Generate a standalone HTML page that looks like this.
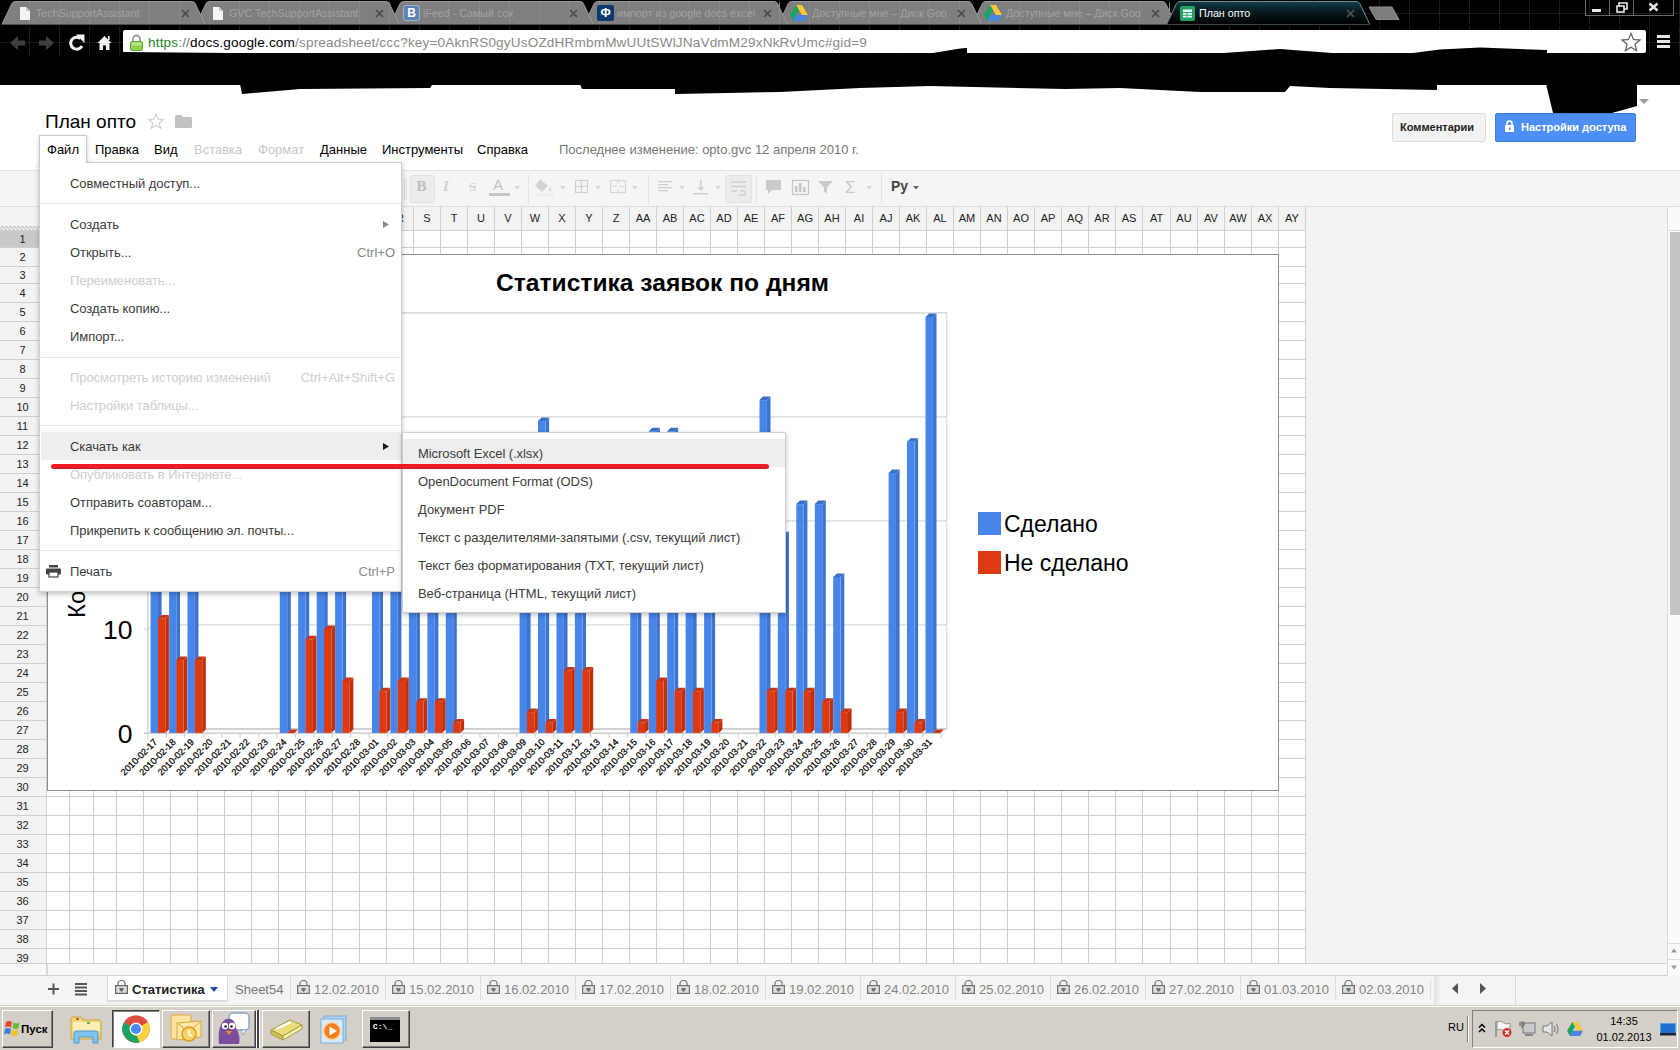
<!DOCTYPE html>
<html lang="ru"><head><meta charset="utf-8"><title>План опто</title>
<style>
html,body{margin:0;padding:0;}
body{width:1680px;height:1050px;overflow:hidden;position:relative;background:#fff;font-family:"Liberation Sans",Arial,sans-serif;font-size:13px;color:#222;}
.abs{position:absolute;}
div,span{box-sizing:border-box;}
svg{position:absolute;overflow:visible;}
.t{position:absolute;white-space:nowrap;line-height:1;}
</style></head><body>
<div class="abs" id="chrome" style="left:0;top:0;width:1680px;height:85px;background:#000;"></div>
<svg width="1680" height="86" style="left:0;top:0"><rect x="29" y="0" width="1" height="56" fill="#1c1c1c"/><rect x="59" y="0" width="1" height="56" fill="#1c1c1c"/><rect x="89" y="0" width="1" height="56" fill="#1c1c1c"/><rect x="119" y="0" width="1" height="56" fill="#1c1c1c"/><rect x="149" y="0" width="1" height="56" fill="#1c1c1c"/><rect x="179" y="0" width="1" height="56" fill="#1c1c1c"/><rect x="209" y="0" width="1" height="56" fill="#1c1c1c"/><rect x="239" y="0" width="1" height="56" fill="#1c1c1c"/><rect x="269" y="0" width="1" height="56" fill="#1c1c1c"/><rect x="299" y="0" width="1" height="56" fill="#1c1c1c"/><rect x="329" y="0" width="1" height="56" fill="#1c1c1c"/><rect x="359" y="0" width="1" height="56" fill="#1c1c1c"/><rect x="389" y="0" width="1" height="56" fill="#1c1c1c"/><rect x="419" y="0" width="1" height="56" fill="#1c1c1c"/><rect x="449" y="0" width="1" height="56" fill="#1c1c1c"/><rect x="479" y="0" width="1" height="56" fill="#1c1c1c"/><rect x="509" y="0" width="1" height="56" fill="#1c1c1c"/><rect x="539" y="0" width="1" height="56" fill="#1c1c1c"/><rect x="569" y="0" width="1" height="56" fill="#1c1c1c"/><rect x="599" y="0" width="1" height="56" fill="#1c1c1c"/><rect x="629" y="0" width="1" height="56" fill="#1c1c1c"/><rect x="659" y="0" width="1" height="56" fill="#1c1c1c"/><rect x="689" y="0" width="1" height="56" fill="#1c1c1c"/><rect x="719" y="0" width="1" height="56" fill="#1c1c1c"/><rect x="749" y="0" width="1" height="56" fill="#1c1c1c"/><rect x="779" y="0" width="1" height="56" fill="#1c1c1c"/><rect x="809" y="0" width="1" height="56" fill="#1c1c1c"/><rect x="839" y="0" width="1" height="56" fill="#1c1c1c"/><rect x="869" y="0" width="1" height="56" fill="#1c1c1c"/><rect x="899" y="0" width="1" height="56" fill="#1c1c1c"/><rect x="929" y="0" width="1" height="56" fill="#1c1c1c"/><rect x="959" y="0" width="1" height="56" fill="#1c1c1c"/><rect x="989" y="0" width="1" height="56" fill="#1c1c1c"/><rect x="1019" y="0" width="1" height="56" fill="#1c1c1c"/><rect x="1049" y="0" width="1" height="56" fill="#1c1c1c"/><rect x="1079" y="0" width="1" height="56" fill="#1c1c1c"/><rect x="1109" y="0" width="1" height="56" fill="#1c1c1c"/><rect x="1139" y="0" width="1" height="56" fill="#1c1c1c"/><rect x="1169" y="0" width="1" height="56" fill="#1c1c1c"/><rect x="1199" y="0" width="1" height="56" fill="#1c1c1c"/><rect x="1229" y="0" width="1" height="56" fill="#1c1c1c"/><rect x="1259" y="0" width="1" height="56" fill="#1c1c1c"/><rect x="1289" y="0" width="1" height="56" fill="#1c1c1c"/><rect x="1319" y="0" width="1" height="56" fill="#1c1c1c"/><rect x="1349" y="0" width="1" height="56" fill="#1c1c1c"/><rect x="1379" y="0" width="1" height="56" fill="#1c1c1c"/><rect x="1409" y="0" width="1" height="56" fill="#1c1c1c"/><rect x="1439" y="0" width="1" height="56" fill="#1c1c1c"/><rect x="1469" y="0" width="1" height="56" fill="#1c1c1c"/><rect x="1499" y="0" width="1" height="56" fill="#1c1c1c"/><rect x="1529" y="0" width="1" height="56" fill="#1c1c1c"/><rect x="1559" y="0" width="1" height="56" fill="#1c1c1c"/><rect x="1589" y="0" width="1" height="56" fill="#1c1c1c"/><rect x="1619" y="0" width="1" height="56" fill="#1c1c1c"/><rect x="1649" y="0" width="1" height="56" fill="#1c1c1c"/><rect x="1679" y="0" width="1" height="56" fill="#1c1c1c"/><rect x="0" y="13" width="1680" height="1" fill="#1c1c1c"/><rect x="0" y="42" width="1680" height="1" fill="#1c1c1c"/></svg>
<svg width="1680" height="26" style="left:0;top:0"><path d="M972.4,24.5 L982.4,3.5 Q983.4,1.5 985.9,1.5 L1162.2,1.5 Q1164.7,1.5 1165.7,3.5 L1175.7,24.5 Z" fill="#7f7f7f" stroke="#9a9a9a" stroke-width="1"/><path d="M778.3,24.5 L788.3,3.5 Q789.3,1.5 791.8,1.5 L968.1,1.5 Q970.6,1.5 971.6,3.5 L981.6,24.5 Z" fill="#7f7f7f" stroke="#9a9a9a" stroke-width="1"/><path d="M584.2,24.5 L594.2,3.5 Q595.2,1.5 597.7,1.5 L774.0,1.5 Q776.5,1.5 777.5,3.5 L787.5,24.5 Z" fill="#7f7f7f" stroke="#9a9a9a" stroke-width="1"/><path d="M390.1,24.5 L400.1,3.5 Q401.1,1.5 403.6,1.5 L579.9,1.5 Q582.4,1.5 583.4,3.5 L593.4,24.5 Z" fill="#7f7f7f" stroke="#9a9a9a" stroke-width="1"/><path d="M196.0,24.5 L206.0,3.5 Q207.0,1.5 209.5,1.5 L385.8,1.5 Q388.3,1.5 389.3,3.5 L399.3,24.5 Z" fill="#7f7f7f" stroke="#9a9a9a" stroke-width="1"/><path d="M1.9,24.5 L11.9,3.5 Q12.9,1.5 15.4,1.5 L191.7,1.5 Q194.2,1.5 195.2,3.5 L205.2,24.5 Z" fill="#7f7f7f" stroke="#9a9a9a" stroke-width="1"/><rect x="29" y="2.5" width="1" height="21.5" fill="#898989"/><rect x="59" y="2.5" width="1" height="21.5" fill="#898989"/><rect x="89" y="2.5" width="1" height="21.5" fill="#898989"/><rect x="119" y="2.5" width="1" height="21.5" fill="#898989"/><rect x="149" y="2.5" width="1" height="21.5" fill="#898989"/><rect x="179" y="2.5" width="1" height="21.5" fill="#898989"/><rect x="209" y="2.5" width="1" height="21.5" fill="#898989"/><rect x="239" y="2.5" width="1" height="21.5" fill="#898989"/><rect x="269" y="2.5" width="1" height="21.5" fill="#898989"/><rect x="299" y="2.5" width="1" height="21.5" fill="#898989"/><rect x="329" y="2.5" width="1" height="21.5" fill="#898989"/><rect x="359" y="2.5" width="1" height="21.5" fill="#898989"/><rect x="389" y="2.5" width="1" height="21.5" fill="#898989"/><rect x="419" y="2.5" width="1" height="21.5" fill="#898989"/><rect x="449" y="2.5" width="1" height="21.5" fill="#898989"/><rect x="479" y="2.5" width="1" height="21.5" fill="#898989"/><rect x="509" y="2.5" width="1" height="21.5" fill="#898989"/><rect x="539" y="2.5" width="1" height="21.5" fill="#898989"/><rect x="569" y="2.5" width="1" height="21.5" fill="#898989"/><rect x="599" y="2.5" width="1" height="21.5" fill="#898989"/><rect x="629" y="2.5" width="1" height="21.5" fill="#898989"/><rect x="659" y="2.5" width="1" height="21.5" fill="#898989"/><rect x="689" y="2.5" width="1" height="21.5" fill="#898989"/><rect x="719" y="2.5" width="1" height="21.5" fill="#898989"/><rect x="749" y="2.5" width="1" height="21.5" fill="#898989"/><rect x="779" y="2.5" width="1" height="21.5" fill="#898989"/><rect x="809" y="2.5" width="1" height="21.5" fill="#898989"/><rect x="839" y="2.5" width="1" height="21.5" fill="#898989"/><rect x="869" y="2.5" width="1" height="21.5" fill="#898989"/><rect x="899" y="2.5" width="1" height="21.5" fill="#898989"/><rect x="929" y="2.5" width="1" height="21.5" fill="#898989"/><rect x="959" y="2.5" width="1" height="21.5" fill="#898989"/><rect x="989" y="2.5" width="1" height="21.5" fill="#898989"/><rect x="1019" y="2.5" width="1" height="21.5" fill="#898989"/><rect x="1049" y="2.5" width="1" height="21.5" fill="#898989"/><rect x="1079" y="2.5" width="1" height="21.5" fill="#898989"/><rect x="1109" y="2.5" width="1" height="21.5" fill="#898989"/><rect x="1139" y="2.5" width="1" height="21.5" fill="#898989"/><rect x="1169" y="2.5" width="1" height="21.5" fill="#898989"/><defs><linearGradient id="atg" x1="0" y1="0" x2="0" y2="1"><stop offset="0" stop-color="#12414d"/><stop offset="0.4" stop-color="#081c22"/><stop offset="1" stop-color="#000"/></linearGradient></defs><path d="M1166.5,24.5 L1176.5,3.5 Q1177.5,1.5 1180.0,1.5 L1356.3,1.5 Q1358.8,1.5 1359.8,3.5 L1369.8,24.5 Z" fill="url(#atg)" stroke="#6f8d94" stroke-width="1"/><rect x="0" y="24.5" width="1680" height="1.5" fill="#000"/><path d="M1369,7 L1392,7 L1399,19.500 L1376,19.500 Z" fill="#7e7e7e" stroke="#8c8c8c" stroke-width="1"/></svg>
<svg width="10" height="13" style="left:20px;top:7px"><path d="M0,0 L6,0 L10,4 L10,13 L0,13 Z" fill="#f4f4f4"/><path d="M6,0 L6,4 L10,4 Z" fill="#c8c8c8"/></svg>
<div class="t" style="left:36px;top:6px;font-size:10.7px;color:#a2a2a2;width:138px;overflow:hidden;height:16px;line-height:15px;letter-spacing:0px">TechSupportAssistant</div>
<svg width="9" height="9" style="left:180.9px;top:9px"><path d="M1,1 L8,8 M8,1 L1,8" stroke="#4a4a4a" stroke-width="1.6" fill="none"/></svg>
<svg width="10" height="13" style="left:213px;top:7px"><path d="M0,0 L6,0 L10,4 L10,13 L0,13 Z" fill="#f4f4f4"/><path d="M6,0 L6,4 L10,4 Z" fill="#c8c8c8"/></svg>
<div class="t" style="left:229px;top:6px;font-size:10.7px;color:#a2a2a2;width:139px;overflow:hidden;height:16px;line-height:15px;letter-spacing:0px">GVC TechSupportAssistant</div>
<svg width="9" height="9" style="left:375.0px;top:9px"><path d="M1,1 L8,8 M8,1 L1,8" stroke="#4a4a4a" stroke-width="1.6" fill="none"/></svg>
<div class="abs" style="left:403px;top:5px;width:17px;height:16px;background:#5b83b4;border:1px solid #9fb6d2;border-radius:3px;color:#fff;font-weight:bold;font-size:12px;line-height:14px;text-align:center;">B</div>
<div class="t" style="left:423px;top:6px;font-size:10.7px;color:#a2a2a2;width:139px;overflow:hidden;height:16px;line-height:15px;letter-spacing:0px">iFeed - Самый сок</div>
<svg width="9" height="9" style="left:569.0999999999999px;top:9px"><path d="M1,1 L8,8 M8,1 L1,8" stroke="#4a4a4a" stroke-width="1.6" fill="none"/></svg>
<div class="abs" style="left:597px;top:5px;width:17px;height:16px;background:#0c3a6e;border-radius:2px;color:#fff;font-weight:bold;font-size:12px;line-height:16px;text-align:center;">Ф</div>
<div class="t" style="left:617px;top:6px;font-size:10.7px;color:#a2a2a2;width:139px;overflow:hidden;height:16px;line-height:15px;letter-spacing:0px">импорт из google docs excel</div>
<svg width="9" height="9" style="left:763.1999999999999px;top:9px"><path d="M1,1 L8,8 M8,1 L1,8" stroke="#4a4a4a" stroke-width="1.6" fill="none"/></svg>
<svg width="18" height="16" style="left:790px;top:5px"><path d="M6,0 L12,0 L18,10 L12,10 Z" fill="#f9c73a"/><path d="M6,0 L0,10 L3,16 L9,5 Z" fill="#1ca261"/><path d="M6,10 L18,10 L15,16 L3,16 Z" fill="#4a86e0"/></svg>
<div class="t" style="left:812px;top:6px;font-size:10.7px;color:#a2a2a2;width:138px;overflow:hidden;height:16px;line-height:15px;letter-spacing:0px">Доступные мне – Диск Goo</div>
<svg width="9" height="9" style="left:957.3px;top:9px"><path d="M1,1 L8,8 M8,1 L1,8" stroke="#4a4a4a" stroke-width="1.6" fill="none"/></svg>
<svg width="18" height="16" style="left:984px;top:5px"><path d="M6,0 L12,0 L18,10 L12,10 Z" fill="#f9c73a"/><path d="M6,0 L0,10 L3,16 L9,5 Z" fill="#1ca261"/><path d="M6,10 L18,10 L15,16 L3,16 Z" fill="#4a86e0"/></svg>
<div class="t" style="left:1006px;top:6px;font-size:10.7px;color:#a2a2a2;width:138px;overflow:hidden;height:16px;line-height:15px;letter-spacing:0px">Доступные мне – Диск Goo</div>
<svg width="9" height="9" style="left:1151.4px;top:9px"><path d="M1,1 L8,8 M8,1 L1,8" stroke="#4a4a4a" stroke-width="1.6" fill="none"/></svg>
<svg width="15" height="15" style="left:1180px;top:6px"><rect x="0" y="0" width="15" height="15" rx="2" fill="#1fa463"/><rect x="3" y="3.5" width="9" height="8" fill="#fff"/><rect x="3" y="6" width="9" height="1" fill="#1fa463"/><rect x="3" y="8.7" width="9" height="1" fill="#1fa463"/><rect x="6.5" y="6" width="1" height="5.5" fill="#1fa463"/></svg>
<div class="t" style="left:1199px;top:6px;font-size:10.7px;color:#ffffff;width:140px;overflow:hidden;height:16px;line-height:15px;letter-spacing:0px">План опто</div>
<svg width="9" height="9" style="left:1345.5px;top:9px"><path d="M1,1 L8,8 M8,1 L1,8" stroke="#555" stroke-width="1.6" fill="none"/></svg>
<svg width="90" height="22" style="left:1585px;top:0"><g stroke="#6a6a6a" fill="none" stroke-width="1"><rect x="0.5" y="-0.5" width="24" height="16"/><rect x="24.5" y="-0.5" width="24" height="16"/><rect x="48.5" y="-0.5" width="40" height="16"/></g><rect x="7" y="9" width="9" height="3" fill="#e8e8e8"/><g stroke="#e8e8e8" stroke-width="1.6" fill="none"><rect x="32" y="6" width="7" height="6"/><path d="M34,6 V3 H42 V9 H39"/></g><path d="M64.500,3.500 L72.500,10.500 M72.500,3.500 L64.500,10.500" stroke="#e8e8e8" stroke-width="2.4"/></svg>
<svg width="120" height="30" style="left:0;top:28px"><path d="M10,15 L18,8 L18,12.5 L25,12.5 L25,17.5 L18,17.5 L18,22 Z" fill="#3f3f3f"/><path d="M54,15 L46,8 L46,12.5 L39,12.5 L39,17.5 L46,17.5 L46,22 Z" fill="#3f3f3f"/><path d="M80.500,10.500 A6,6 0 1 0 82,18" stroke="#f2f2f2" stroke-width="3" fill="none"/><path d="M76,6.500 L84.500,6.500 L84.500,15 Z" fill="#f2f2f2"/><path d="M104.5,8 L97.5,15 L99.5,15 L99.5,22 L103,22 L103,17.5 L106,17.5 L106,22 L109.500,22 L109.500,15 L111.500,15 Z" fill="#f2f2f2"/><rect x="108" y="8" width="1.6" height="4" fill="#f2f2f2"/></svg>
<div class="abs" style="left:123px;top:30px;width:1523px;height:23px;background:#fff;border-radius:2px;"></div>
<svg width="13" height="17" style="left:130px;top:34px"><path d="M3,8 V5 A3.5,3.500 0 0 1 10,5 V8" stroke="#9a9a9a" stroke-width="1.8" fill="none"/><rect x="0.5" y="7.5" width="12" height="9" rx="1.5" fill="#8fd14f" stroke="#5fa82e"/><rect x="1.5" y="8.500" width="10" height="3" fill="#b5e68a"/></svg>
<div class="t" id="url" style="left:148px;top:35px;font-size:13.6px;line-height:16px;color:#8a8a8a;letter-spacing:0.15px"><span style="color:#1f8b1f">https</span><span style="color:#777">://</span><span style="color:#000">docs.google.com</span>/spreadsheet/ccc?key=0AknRS0gyUsOZdHRmbmMwUUtSWlJNaVdmM29xNkRvUmc#gid=9</div>
<svg width="20" height="20" style="left:1621px;top:32px"><path d="M10,1.500 L12.5,7.500 L19,8 L14,12.3 L15.600,18.600 L10,15.200 L4.400,18.600 L6,12.3 L1,8 L7.500,7.500 Z" fill="#fff" stroke="#666" stroke-width="1.3"/></svg>
<svg width="14" height="16" style="left:1657px;top:35px"><rect x="0" y="0" width="13" height="3" fill="#e6e6e6"/><rect x="0" y="5" width="13" height="3" fill="#e6e6e6"/><rect x="0" y="10" width="13" height="3" fill="#e6e6e6"/></svg>
<div class="t" style="left:228px;top:64px;font-size:12px;color:#2c2c2c">-20</div>
<div class="t" style="left:1067px;top:64px;font-size:12px;color:#2c2c2c">из...</div>
<div class="t" style="left:1511px;top:64px;font-size:12px;color:#2c2c2c">льс...</div>
<div class="t" style="left:1444px;top:64px;font-size:12px;color:#2c2c2c">ис</div>
<svg width="1680" height="120" style="left:0;top:0"><polygon points="0,56 123,56 123,52 300,53.5 927,54 960,48.5 967,48 967,54 1210,54 1280,49 1345,54 1405,54 1440,49.5 1480,47.5 1547,50 1547,54 1646,54 1646,56 1680,56 1680,84 1637,84 1637,106 1612,113 1553,113 1546,84 1437,84 1437,90 1330,88 1290,86 1285,92 1200,92 1120,88 1065,89 930,86 860,88 780,92 675,94 675,89 582,89 580,84 432,85 430,88 300,89 242,94 240,84 0,84" fill="#000"/><path d="M1639,99 L1649,99 L1644,104 Z" fill="#9a9a9a"/></svg>
<div class="t" id="title" style="left:45px;top:111px;font-size:19px;line-height:22px;color:#000;">План опто</div>
<svg width="16" height="16" style="left:148px;top:113px"><path d="M8,1 L10,6.2 L15.3,6.500 L11.2,10 L12.6,15.200 L8,12.3 L3.400,15.200 L4.800,10 L0.7,6.500 L6,6.200 Z" fill="none" stroke="#d2d2d2" stroke-width="1.2"/></svg>
<svg width="17" height="13" style="left:175px;top:115px"><path d="M0,1.500 Q0,0 1.500,0 L6,0 L8,2 L15.500,2 Q17,2 17,3.500 L17,11.500 Q17,13 15.500,13 L1.500,13 Q0,13 0,11.500 Z" fill="#c2c2c2"/></svg>
<div class="abs" style="left:39px;top:135px;width:48px;height:30px;background:#fff;border:1px solid #c8c8c8;border-bottom:none;box-shadow:0 2px 4px rgba(0,0,0,0.2);"></div>
<div class="t mb" style="left:47px;top:142px;font-size:13px;line-height:15px;color:#000;">Файл</div>
<div class="t mb" style="left:95px;top:142px;font-size:13px;line-height:15px;color:#000;">Правка</div>
<div class="t mb" style="left:154px;top:142px;font-size:13px;line-height:15px;color:#000;">Вид</div>
<div class="t mb" style="left:194px;top:142px;font-size:13px;line-height:15px;color:#c8c8c8;">Вставка</div>
<div class="t mb" style="left:258px;top:142px;font-size:13px;line-height:15px;color:#c8c8c8;">Формат</div>
<div class="t mb" style="left:320px;top:142px;font-size:13px;line-height:15px;color:#000;">Данные</div>
<div class="t mb" style="left:382px;top:142px;font-size:13px;line-height:15px;color:#000;">Инструменты</div>
<div class="t mb" style="left:477px;top:142px;font-size:13px;line-height:15px;color:#000;">Справка</div>
<div class="t mb" style="left:559px;top:142px;font-size:13px;line-height:15px;color:#777;">Последнее изменение: opto.gvc 12 апреля 2010 г.</div>
<div class="abs" style="left:1392px;top:113px;width:94px;height:29px;background:#f3f3f3;border:1px solid #dcdcdc;border-radius:2px;"></div>
<div class="t" id="bcom" style="left:1400px;top:121px;font-size:11px;font-weight:bold;color:#222;line-height:13px">Комментарии</div>
<div class="abs" style="left:1495px;top:113px;width:141px;height:29px;background:#4d8ff5;border:1px solid #3f7de0;border-radius:2px;"></div>
<svg width="9" height="12" style="left:1505px;top:120px"><path d="M2,5 V3.500 A2.500,2.500 0 0 1 7,3.500 V5" stroke="#fff" stroke-width="1.600" fill="none"/><rect x="0" y="5" width="9" height="7" rx="1" fill="#fff"/><rect x="4" y="7.500" width="1.500" height="2.5" fill="#4d8ff5"/></svg>
<div class="t" id="bshare" style="left:1521px;top:121px;font-size:11px;font-weight:bold;color:#fff;line-height:13px">Настройки доступа</div>
<div class="abs" style="left:0;top:170px;width:1680px;height:37px;background:#f5f5f5;border-top:1px solid #e4e4e4;border-bottom:1px solid #dedede;"></div>
<svg width="560" height="36" style="left:400px;top:171px"><rect x="4" y="7" width="1" height="22" fill="#d8d8d8"/><rect x="6" y="7" width="1" height="22" fill="#e4e4e4"/><rect x="10.500" y="4.500" width="24" height="27" rx="2" fill="#ececec" stroke="#e0e0e0"/></svg>
<div class="t" style="left:416.500px;top:179px;font-size:15px;font-weight:bold;color:#bdbdbd;font-family:'Liberation Serif',serif">B</div>
<div class="t" style="left:443px;top:179px;font-size:15px;font-style:italic;font-weight:bold;color:#d2d2d2;font-family:'Liberation Serif',serif">I</div>
<div class="t" style="left:469px;top:180px;font-size:13px;text-decoration:line-through;color:#cfcfcf;font-family:'Liberation Serif',serif">S</div>
<div class="t" style="left:493px;top:177px;font-size:15px;color:#c4c4c4;">A</div>
<div class="abs" style="left:489px;top:193px;width:21px;height:3px;background:#c6c6c6"></div>
<svg width="560" height="36" style="left:400px;top:171px"><path d="M114,15 l6,0 l-3,3.5 Z" fill="#d6d6d6"/><rect x="128" y="3" width="1" height="30" fill="#e6e6e6"/><path d="M140,8 l8,7 l-6,6 l-7,-6 Z" fill="#d4d4d4"/><path d="M150,16 q2,3 0,4.5 q-2,-1.500 0,-4.500 Z" fill="#d4d4d4"/><rect x="136" y="22" width="18" height="3" fill="#ededed"/><path d="M160,15 l6,0 l-3,3.5 Z" fill="#d6d6d6"/><g stroke="#d0d0d0" fill="none" stroke-width="1.2"><rect x="175.500" y="9.500" width="12" height="12"/><path d="M181.500,9.500 v12 M175.500,15.500 h12"/></g><path d="M195,15 l6,0 l-3,3.5 Z" fill="#d6d6d6"/><g stroke="#d6d6d6" fill="none" stroke-width="1.2"><rect x="210.500" y="9.500" width="15" height="12"/><path d="M218,9.500 v3 M218,18.500 v3 M212.500,15.500 h4 M219.500,15.500 h4"/></g><path d="M232,15 l6,0 l-3,3.5 Z" fill="#d6d6d6"/><rect x="248" y="3" width="1" height="30" fill="#e6e6e6"/><g fill="#cfcfcf"><rect x="258" y="10" width="14" height="1.300"/><rect x="258" y="13" width="10" height="1.300"/><rect x="258" y="16" width="14" height="1.300"/><rect x="258" y="19" width="10" height="1.300"/></g><path d="M279,15 l6,0 l-3,3.5 Z" fill="#d6d6d6"/><g fill="#cfcfcf"><rect x="300" y="9" width="1.500" height="9"/><path d="M297,16 l7.500,0 l-3.750,4 Z"/><rect x="293" y="22" width="15" height="1.500"/></g><path d="M315,15 l6,0 l-3,3.5 Z" fill="#d6d6d6"/><rect x="325.500" y="4.500" width="26" height="27" rx="2" fill="#ececec" stroke="#e2e2e2"/><g stroke="#cfcfcf" fill="none" stroke-width="1.300"><path d="M331,11 h15 M331,15.500 h15 M331,20 h6 M340,20 h5 v4 h-6"/></g><rect x="356" y="3" width="1" height="30" fill="#e6e6e6"/><path d="M366,9 h15 v10 h-9 l-4,4 v-4 h-2 Z" fill="#cacaca"/><g stroke="#c6c6c6" fill="none" stroke-width="1.300"><rect x="392.500" y="9.500" width="16" height="14"/></g><g fill="#c6c6c6"><rect x="395" y="15" width="2.500" height="6"/><rect x="399" y="12" width="2.500" height="9"/><rect x="403" y="16" width="2.500" height="5"/></g><path d="M418,10 h15 l-6,6.500 v6 l-3,-2 v-4 Z" fill="#cacaca"/></svg>
<div class="t" style="left:845px;top:179px;font-size:17px;color:#c9c9c9;">Σ</div>
<svg width="10" height="6" style="left:866px;top:186px"><path d="M0,0 l6,0 l-3,3.500 Z" fill="#d6d6d6"/></svg>
<div class="abs" style="left:881px;top:173px;width:1px;height:31px;background:#e4e4e4"></div>
<div class="t" id="py" style="left:891px;top:179px;font-size:14px;font-weight:bold;color:#444;">Ру</div>
<svg width="10" height="6" style="left:913px;top:186px"><path d="M0,0 l6,0 l-3,3.500 Z" fill="#666"/></svg>
<div class="abs" style="left:0;top:207px;width:1680px;height:769px;background:#f3f3f3;"></div>
<div class="abs" style="left:46px;top:231px;width:1260px;height:733px;background:#fff;"></div>
<svg width="1680" height="1050" style="left:0;top:0" shape-rendering="crispEdges"><rect x="46" y="207" width="1260" height="23" fill="#f3f3f3"/><rect x="0" y="230" width="46" height="17" fill="#c9c9c9"/><defs><pattern id="hat" width="4" height="4" patternUnits="userSpaceOnUse"><rect width="4" height="4" fill="#e9e9e9"/><path d="M-1,-1 L5,5 M-1,3 L1,5 M3,-1 L5,1" stroke="#c4c4c4" stroke-width="1.400"/></pattern></defs><rect x="0" y="226" width="46" height="4" fill="url(#hat)" shape-rendering="auto"/><rect x="46" y="207" width="1" height="757" fill="#cfcfcf"/><rect x="69" y="207" width="1" height="757" fill="#cfcfcf"/><rect x="93" y="207" width="1" height="757" fill="#cfcfcf"/><rect x="116" y="207" width="1" height="757" fill="#cfcfcf"/><rect x="143" y="207" width="1" height="757" fill="#cfcfcf"/><rect x="170" y="207" width="1" height="757" fill="#cfcfcf"/><rect x="197" y="207" width="1" height="757" fill="#cfcfcf"/><rect x="224" y="207" width="1" height="757" fill="#cfcfcf"/><rect x="251" y="207" width="1" height="757" fill="#cfcfcf"/><rect x="278" y="207" width="1" height="757" fill="#cfcfcf"/><rect x="305" y="207" width="1" height="757" fill="#cfcfcf"/><rect x="332" y="207" width="1" height="757" fill="#cfcfcf"/><rect x="359" y="207" width="1" height="757" fill="#cfcfcf"/><rect x="386" y="207" width="1" height="757" fill="#cfcfcf"/><rect x="413" y="207" width="1" height="757" fill="#cfcfcf"/><rect x="440" y="207" width="1" height="757" fill="#cfcfcf"/><rect x="467" y="207" width="1" height="757" fill="#cfcfcf"/><rect x="494" y="207" width="1" height="757" fill="#cfcfcf"/><rect x="521" y="207" width="1" height="757" fill="#cfcfcf"/><rect x="548" y="207" width="1" height="757" fill="#cfcfcf"/><rect x="575" y="207" width="1" height="757" fill="#cfcfcf"/><rect x="602" y="207" width="1" height="757" fill="#cfcfcf"/><rect x="629" y="207" width="1" height="757" fill="#cfcfcf"/><rect x="656" y="207" width="1" height="757" fill="#cfcfcf"/><rect x="683" y="207" width="1" height="757" fill="#cfcfcf"/><rect x="710" y="207" width="1" height="757" fill="#cfcfcf"/><rect x="737" y="207" width="1" height="757" fill="#cfcfcf"/><rect x="764" y="207" width="1" height="757" fill="#cfcfcf"/><rect x="791" y="207" width="1" height="757" fill="#cfcfcf"/><rect x="818" y="207" width="1" height="757" fill="#cfcfcf"/><rect x="845" y="207" width="1" height="757" fill="#cfcfcf"/><rect x="872" y="207" width="1" height="757" fill="#cfcfcf"/><rect x="899" y="207" width="1" height="757" fill="#cfcfcf"/><rect x="926" y="207" width="1" height="757" fill="#cfcfcf"/><rect x="953" y="207" width="1" height="757" fill="#cfcfcf"/><rect x="980" y="207" width="1" height="757" fill="#cfcfcf"/><rect x="1007" y="207" width="1" height="757" fill="#cfcfcf"/><rect x="1034" y="207" width="1" height="757" fill="#cfcfcf"/><rect x="1061" y="207" width="1" height="757" fill="#cfcfcf"/><rect x="1088" y="207" width="1" height="757" fill="#cfcfcf"/><rect x="1115" y="207" width="1" height="757" fill="#cfcfcf"/><rect x="1142" y="207" width="1" height="757" fill="#cfcfcf"/><rect x="1170" y="207" width="1" height="757" fill="#cfcfcf"/><rect x="1197" y="207" width="1" height="757" fill="#cfcfcf"/><rect x="1224" y="207" width="1" height="757" fill="#cfcfcf"/><rect x="1251" y="207" width="1" height="757" fill="#cfcfcf"/><rect x="1278" y="207" width="1" height="757" fill="#cfcfcf"/><rect x="1305" y="207" width="1" height="757" fill="#cfcfcf"/><rect x="0" y="230" width="1306" height="1" fill="#cfcfcf"/><rect x="0" y="247" width="1306" height="1" fill="#cfcfcf"/><rect x="0" y="266" width="1306" height="1" fill="#cfcfcf"/><rect x="0" y="283" width="1306" height="1" fill="#cfcfcf"/><rect x="0" y="302" width="1306" height="1" fill="#cfcfcf"/><rect x="0" y="321" width="1306" height="1" fill="#cfcfcf"/><rect x="0" y="340" width="1306" height="1" fill="#cfcfcf"/><rect x="0" y="359" width="1306" height="1" fill="#cfcfcf"/><rect x="0" y="378" width="1306" height="1" fill="#cfcfcf"/><rect x="0" y="397" width="1306" height="1" fill="#cfcfcf"/><rect x="0" y="416" width="1306" height="1" fill="#cfcfcf"/><rect x="0" y="435" width="1306" height="1" fill="#cfcfcf"/><rect x="0" y="454" width="1306" height="1" fill="#cfcfcf"/><rect x="0" y="473" width="1306" height="1" fill="#cfcfcf"/><rect x="0" y="492" width="1306" height="1" fill="#cfcfcf"/><rect x="0" y="511" width="1306" height="1" fill="#cfcfcf"/><rect x="0" y="530" width="1306" height="1" fill="#cfcfcf"/><rect x="0" y="549" width="1306" height="1" fill="#cfcfcf"/><rect x="0" y="568" width="1306" height="1" fill="#cfcfcf"/><rect x="0" y="587" width="1306" height="1" fill="#cfcfcf"/><rect x="0" y="606" width="1306" height="1" fill="#cfcfcf"/><rect x="0" y="625" width="1306" height="1" fill="#cfcfcf"/><rect x="0" y="644" width="1306" height="1" fill="#cfcfcf"/><rect x="0" y="663" width="1306" height="1" fill="#cfcfcf"/><rect x="0" y="682" width="1306" height="1" fill="#cfcfcf"/><rect x="0" y="701" width="1306" height="1" fill="#cfcfcf"/><rect x="0" y="720" width="1306" height="1" fill="#cfcfcf"/><rect x="0" y="739" width="1306" height="1" fill="#cfcfcf"/><rect x="0" y="758" width="1306" height="1" fill="#cfcfcf"/><rect x="0" y="777" width="1306" height="1" fill="#cfcfcf"/><rect x="0" y="796" width="1306" height="1" fill="#cfcfcf"/><rect x="0" y="815" width="1306" height="1" fill="#cfcfcf"/><rect x="0" y="834" width="1306" height="1" fill="#cfcfcf"/><rect x="0" y="853" width="1306" height="1" fill="#cfcfcf"/><rect x="0" y="872" width="1306" height="1" fill="#cfcfcf"/><rect x="0" y="891" width="1306" height="1" fill="#cfcfcf"/><rect x="0" y="910" width="1306" height="1" fill="#cfcfcf"/><rect x="0" y="929" width="1306" height="1" fill="#cfcfcf"/><rect x="0" y="948" width="1306" height="1" fill="#cfcfcf"/><rect x="0" y="963" width="1668" height="1" fill="#cfcfcf"/><rect x="0" y="964" width="1668" height="11" fill="#f8f8f8"/><rect x="46" y="964" width="2" height="11" fill="#d8d8d8"/><rect x="0" y="975" width="1680" height="1" fill="#d0d0d0"/><rect x="1667" y="207" width="13" height="769" fill="#fafafa"/><rect x="1667" y="207" width="1" height="769" fill="#dcdcdc"/><rect x="1668" y="230" width="12" height="1" fill="#dcdcdc"/><rect x="1670" y="232" width="10" height="383" fill="#c4c4c4"/><rect x="1668" y="943" width="12" height="1" fill="#dcdcdc"/><rect x="1668" y="959" width="12" height="1" fill="#dcdcdc"/></svg>
<svg width="12" height="32" style="left:1668px;top:944px"><path d="M3,8.500 l6,0 l-3,-4 Z" fill="#9a9a9a"/><path d="M3,21.500 l6,0 l-3,4 Z" fill="#9a9a9a"/></svg>
<div class="t ch" style="left:144px;top:213px;width:26px;text-align:center;font-size:11px;color:#222;">I</div>
<div class="t ch" style="left:171px;top:213px;width:26px;text-align:center;font-size:11px;color:#222;">J</div>
<div class="t ch" style="left:198px;top:213px;width:26px;text-align:center;font-size:11px;color:#222;">K</div>
<div class="t ch" style="left:225px;top:213px;width:26px;text-align:center;font-size:11px;color:#222;">L</div>
<div class="t ch" style="left:252px;top:213px;width:26px;text-align:center;font-size:11px;color:#222;">M</div>
<div class="t ch" style="left:279px;top:213px;width:26px;text-align:center;font-size:11px;color:#222;">N</div>
<div class="t ch" style="left:306px;top:213px;width:26px;text-align:center;font-size:11px;color:#222;">O</div>
<div class="t ch" style="left:333px;top:213px;width:26px;text-align:center;font-size:11px;color:#222;">P</div>
<div class="t ch" style="left:360px;top:213px;width:26px;text-align:center;font-size:11px;color:#222;">Q</div>
<div class="t ch" style="left:387px;top:213px;width:26px;text-align:center;font-size:11px;color:#222;">R</div>
<div class="t ch" style="left:414px;top:213px;width:26px;text-align:center;font-size:11px;color:#222;">S</div>
<div class="t ch" style="left:441px;top:213px;width:26px;text-align:center;font-size:11px;color:#222;">T</div>
<div class="t ch" style="left:468px;top:213px;width:26px;text-align:center;font-size:11px;color:#222;">U</div>
<div class="t ch" style="left:495px;top:213px;width:26px;text-align:center;font-size:11px;color:#222;">V</div>
<div class="t ch" style="left:522px;top:213px;width:26px;text-align:center;font-size:11px;color:#222;">W</div>
<div class="t ch" style="left:549px;top:213px;width:26px;text-align:center;font-size:11px;color:#222;">X</div>
<div class="t ch" style="left:576px;top:213px;width:26px;text-align:center;font-size:11px;color:#222;">Y</div>
<div class="t ch" style="left:603px;top:213px;width:26px;text-align:center;font-size:11px;color:#222;">Z</div>
<div class="t ch" style="left:630px;top:213px;width:26px;text-align:center;font-size:11px;color:#222;">AA</div>
<div class="t ch" style="left:657px;top:213px;width:26px;text-align:center;font-size:11px;color:#222;">AB</div>
<div class="t ch" style="left:684px;top:213px;width:26px;text-align:center;font-size:11px;color:#222;">AC</div>
<div class="t ch" style="left:711px;top:213px;width:26px;text-align:center;font-size:11px;color:#222;">AD</div>
<div class="t ch" style="left:738px;top:213px;width:26px;text-align:center;font-size:11px;color:#222;">AE</div>
<div class="t ch" style="left:765px;top:213px;width:26px;text-align:center;font-size:11px;color:#222;">AF</div>
<div class="t ch" style="left:792px;top:213px;width:26px;text-align:center;font-size:11px;color:#222;">AG</div>
<div class="t ch" style="left:819px;top:213px;width:26px;text-align:center;font-size:11px;color:#222;">AH</div>
<div class="t ch" style="left:846px;top:213px;width:26px;text-align:center;font-size:11px;color:#222;">AI</div>
<div class="t ch" style="left:873px;top:213px;width:26px;text-align:center;font-size:11px;color:#222;">AJ</div>
<div class="t ch" style="left:900px;top:213px;width:26px;text-align:center;font-size:11px;color:#222;">AK</div>
<div class="t ch" style="left:927px;top:213px;width:26px;text-align:center;font-size:11px;color:#222;">AL</div>
<div class="t ch" style="left:954px;top:213px;width:26px;text-align:center;font-size:11px;color:#222;">AM</div>
<div class="t ch" style="left:981px;top:213px;width:26px;text-align:center;font-size:11px;color:#222;">AN</div>
<div class="t ch" style="left:1008px;top:213px;width:26px;text-align:center;font-size:11px;color:#222;">AO</div>
<div class="t ch" style="left:1035px;top:213px;width:26px;text-align:center;font-size:11px;color:#222;">AP</div>
<div class="t ch" style="left:1062px;top:213px;width:26px;text-align:center;font-size:11px;color:#222;">AQ</div>
<div class="t ch" style="left:1089px;top:213px;width:26px;text-align:center;font-size:11px;color:#222;">AR</div>
<div class="t ch" style="left:1116px;top:213px;width:26px;text-align:center;font-size:11px;color:#222;">AS</div>
<div class="t ch" style="left:1143px;top:213px;width:27px;text-align:center;font-size:11px;color:#222;">AT</div>
<div class="t ch" style="left:1171px;top:213px;width:26px;text-align:center;font-size:11px;color:#222;">AU</div>
<div class="t ch" style="left:1198px;top:213px;width:26px;text-align:center;font-size:11px;color:#222;">AV</div>
<div class="t ch" style="left:1225px;top:213px;width:26px;text-align:center;font-size:11px;color:#222;">AW</div>
<div class="t ch" style="left:1252px;top:213px;width:26px;text-align:center;font-size:11px;color:#222;">AX</div>
<div class="t ch" style="left:1279px;top:213px;width:26px;text-align:center;font-size:11px;color:#222;">AY</div>
<div class="t rh" style="left:0;top:233.5px;width:45px;text-align:center;font-size:11px;color:#222;">1</div>
<div class="t rh" style="left:0;top:251.5px;width:45px;text-align:center;font-size:11px;color:#222;">2</div>
<div class="t rh" style="left:0;top:269.5px;width:45px;text-align:center;font-size:11px;color:#222;">3</div>
<div class="t rh" style="left:0;top:287.5px;width:45px;text-align:center;font-size:11px;color:#222;">4</div>
<div class="t rh" style="left:0;top:306.5px;width:45px;text-align:center;font-size:11px;color:#222;">5</div>
<div class="t rh" style="left:0;top:325.5px;width:45px;text-align:center;font-size:11px;color:#222;">6</div>
<div class="t rh" style="left:0;top:344.5px;width:45px;text-align:center;font-size:11px;color:#222;">7</div>
<div class="t rh" style="left:0;top:363.5px;width:45px;text-align:center;font-size:11px;color:#222;">8</div>
<div class="t rh" style="left:0;top:382.5px;width:45px;text-align:center;font-size:11px;color:#222;">9</div>
<div class="t rh" style="left:0;top:401.5px;width:45px;text-align:center;font-size:11px;color:#222;">10</div>
<div class="t rh" style="left:0;top:420.5px;width:45px;text-align:center;font-size:11px;color:#222;">11</div>
<div class="t rh" style="left:0;top:439.5px;width:45px;text-align:center;font-size:11px;color:#222;">12</div>
<div class="t rh" style="left:0;top:458.5px;width:45px;text-align:center;font-size:11px;color:#222;">13</div>
<div class="t rh" style="left:0;top:477.5px;width:45px;text-align:center;font-size:11px;color:#222;">14</div>
<div class="t rh" style="left:0;top:496.5px;width:45px;text-align:center;font-size:11px;color:#222;">15</div>
<div class="t rh" style="left:0;top:515.5px;width:45px;text-align:center;font-size:11px;color:#222;">16</div>
<div class="t rh" style="left:0;top:534.5px;width:45px;text-align:center;font-size:11px;color:#222;">17</div>
<div class="t rh" style="left:0;top:553.5px;width:45px;text-align:center;font-size:11px;color:#222;">18</div>
<div class="t rh" style="left:0;top:572.5px;width:45px;text-align:center;font-size:11px;color:#222;">19</div>
<div class="t rh" style="left:0;top:591.5px;width:45px;text-align:center;font-size:11px;color:#222;">20</div>
<div class="t rh" style="left:0;top:610.5px;width:45px;text-align:center;font-size:11px;color:#222;">21</div>
<div class="t rh" style="left:0;top:629.5px;width:45px;text-align:center;font-size:11px;color:#222;">22</div>
<div class="t rh" style="left:0;top:648.5px;width:45px;text-align:center;font-size:11px;color:#222;">23</div>
<div class="t rh" style="left:0;top:667.5px;width:45px;text-align:center;font-size:11px;color:#222;">24</div>
<div class="t rh" style="left:0;top:686.5px;width:45px;text-align:center;font-size:11px;color:#222;">25</div>
<div class="t rh" style="left:0;top:705.5px;width:45px;text-align:center;font-size:11px;color:#222;">26</div>
<div class="t rh" style="left:0;top:724.5px;width:45px;text-align:center;font-size:11px;color:#222;">27</div>
<div class="t rh" style="left:0;top:743.5px;width:45px;text-align:center;font-size:11px;color:#222;">28</div>
<div class="t rh" style="left:0;top:762.5px;width:45px;text-align:center;font-size:11px;color:#222;">29</div>
<div class="t rh" style="left:0;top:781.5px;width:45px;text-align:center;font-size:11px;color:#222;">30</div>
<div class="t rh" style="left:0;top:800.5px;width:45px;text-align:center;font-size:11px;color:#222;">31</div>
<div class="t rh" style="left:0;top:819.5px;width:45px;text-align:center;font-size:11px;color:#222;">32</div>
<div class="t rh" style="left:0;top:838.5px;width:45px;text-align:center;font-size:11px;color:#222;">33</div>
<div class="t rh" style="left:0;top:857.5px;width:45px;text-align:center;font-size:11px;color:#222;">34</div>
<div class="t rh" style="left:0;top:876.5px;width:45px;text-align:center;font-size:11px;color:#222;">35</div>
<div class="t rh" style="left:0;top:895.5px;width:45px;text-align:center;font-size:11px;color:#222;">36</div>
<div class="t rh" style="left:0;top:914.5px;width:45px;text-align:center;font-size:11px;color:#222;">37</div>
<div class="t rh" style="left:0;top:933.5px;width:45px;text-align:center;font-size:11px;color:#222;">38</div>
<div class="t rh" style="left:0;top:952.5px;width:45px;text-align:center;font-size:11px;color:#222;">39</div>
<svg id="chart" width="1232" height="537" viewBox="47 254 1232 537" style="left:47px;top:254px;font-family:'Liberation Sans',Arial,sans-serif"><rect x="47.5" y="254.5" width="1231" height="536" fill="#fff" stroke="#8c8c8c" stroke-width="1"/><text id="ctitle" x="662.500" y="291" text-anchor="middle" font-size="24.6" font-weight="bold" fill="#000">Статистика заявок по дням</text><rect x="153.4" y="312.9" width="793.4" height="416.0" fill="#fff" stroke="#dedede" stroke-width="1.2"/><path d="M143.8,733.2 L147.8,733.2 L153.4,728.9 L946.8,728.9" fill="none" stroke="#d9d9d9" stroke-width="1.3"/><path d="M143.8,629.2 L147.8,629.2 L153.4,624.9 L946.8,624.9" fill="none" stroke="#d9d9d9" stroke-width="1.3"/><path d="M143.8,525.2 L147.8,525.2 L153.4,520.9 L946.8,520.9" fill="none" stroke="#d9d9d9" stroke-width="1.3"/><path d="M143.8,421.2 L147.8,421.2 L153.4,416.9 L946.8,416.9" fill="none" stroke="#d9d9d9" stroke-width="1.3"/><path d="M143.8,317.2 L147.8,317.2 L153.4,312.9 L946.8,312.9" fill="none" stroke="#d9d9d9" stroke-width="1.3"/><path d="M147.8,317.2 L147.8,733.2" stroke="#cfcfcf" stroke-width="1.3" fill="none"/><path d="M147.8,317.2 L153.4,312.9" stroke="#d9d9d9" stroke-width="1" fill="none"/><path d="M147.8,733.2 L941.2,733.2 L946.8,728.9 L153.4,728.9 Z" fill="#fbfbfb" stroke="#e2e2e2" stroke-width="0.8"/><path d="M153.4,728.9 L946.8,728.9" stroke="#cdcdcd" stroke-width="1.800" fill="none"/><path d="M143.8,733.2 L941.2,733.2" stroke="#cfcfcf" stroke-width="1.4" fill="none"/><rect x="147.2" y="733.2" width="1.2" height="4.5" fill="#d4d4d4"/><rect x="165.7" y="733.2" width="1.2" height="4.5" fill="#d4d4d4"/><rect x="184.1" y="733.2" width="1.2" height="4.5" fill="#d4d4d4"/><rect x="202.6" y="733.2" width="1.2" height="4.5" fill="#d4d4d4"/><rect x="221.0" y="733.2" width="1.2" height="4.5" fill="#d4d4d4"/><rect x="239.5" y="733.2" width="1.2" height="4.5" fill="#d4d4d4"/><rect x="257.9" y="733.2" width="1.2" height="4.5" fill="#d4d4d4"/><rect x="276.4" y="733.2" width="1.2" height="4.5" fill="#d4d4d4"/><rect x="294.8" y="733.2" width="1.2" height="4.5" fill="#d4d4d4"/><rect x="313.2" y="733.2" width="1.2" height="4.5" fill="#d4d4d4"/><rect x="331.7" y="733.2" width="1.2" height="4.5" fill="#d4d4d4"/><rect x="350.1" y="733.2" width="1.2" height="4.5" fill="#d4d4d4"/><rect x="368.6" y="733.2" width="1.2" height="4.5" fill="#d4d4d4"/><rect x="387.0" y="733.2" width="1.2" height="4.5" fill="#d4d4d4"/><rect x="405.5" y="733.2" width="1.2" height="4.5" fill="#d4d4d4"/><rect x="423.9" y="733.2" width="1.2" height="4.5" fill="#d4d4d4"/><rect x="442.4" y="733.2" width="1.2" height="4.5" fill="#d4d4d4"/><rect x="460.8" y="733.2" width="1.2" height="4.5" fill="#d4d4d4"/><rect x="479.3" y="733.2" width="1.2" height="4.5" fill="#d4d4d4"/><rect x="497.8" y="733.2" width="1.2" height="4.5" fill="#d4d4d4"/><rect x="516.2" y="733.2" width="1.2" height="4.5" fill="#d4d4d4"/><rect x="534.6" y="733.2" width="1.2" height="4.5" fill="#d4d4d4"/><rect x="553.1" y="733.2" width="1.2" height="4.5" fill="#d4d4d4"/><rect x="571.5" y="733.2" width="1.2" height="4.5" fill="#d4d4d4"/><rect x="590.0" y="733.2" width="1.2" height="4.5" fill="#d4d4d4"/><rect x="608.4" y="733.2" width="1.2" height="4.5" fill="#d4d4d4"/><rect x="626.9" y="733.2" width="1.2" height="4.5" fill="#d4d4d4"/><rect x="645.4" y="733.2" width="1.2" height="4.5" fill="#d4d4d4"/><rect x="663.8" y="733.2" width="1.2" height="4.5" fill="#d4d4d4"/><rect x="682.2" y="733.2" width="1.2" height="4.5" fill="#d4d4d4"/><rect x="700.7" y="733.2" width="1.2" height="4.5" fill="#d4d4d4"/><rect x="719.1" y="733.2" width="1.2" height="4.5" fill="#d4d4d4"/><rect x="737.6" y="733.2" width="1.2" height="4.5" fill="#d4d4d4"/><rect x="756.1" y="733.2" width="1.2" height="4.5" fill="#d4d4d4"/><rect x="774.5" y="733.2" width="1.2" height="4.5" fill="#d4d4d4"/><rect x="792.9" y="733.2" width="1.2" height="4.5" fill="#d4d4d4"/><rect x="811.4" y="733.2" width="1.2" height="4.5" fill="#d4d4d4"/><rect x="829.9" y="733.2" width="1.2" height="4.5" fill="#d4d4d4"/><rect x="848.3" y="733.2" width="1.2" height="4.5" fill="#d4d4d4"/><rect x="866.7" y="733.2" width="1.2" height="4.5" fill="#d4d4d4"/><rect x="885.2" y="733.2" width="1.2" height="4.5" fill="#d4d4d4"/><rect x="903.6" y="733.2" width="1.2" height="4.5" fill="#d4d4d4"/><rect x="922.1" y="733.2" width="1.2" height="4.5" fill="#d4d4d4"/><rect x="940.6" y="733.2" width="1.2" height="4.5" fill="#d4d4d4"/><path d="M158.0,732.9 L161.6,729.4 L161.6,417.4 L158.0,420.9 Z" fill="#3d74d0"/><rect x="150.6" y="420.9" width="7.4" height="312.0" fill="#4785ea"/><path d="M150.6,420.9 L158.0,420.9 L161.6,417.4 L154.2,417.4 Z" fill="#3a6fc8"/><path d="M165.3,732.9 L168.9,729.4 L168.9,615.0 L165.3,618.5 Z" fill="#c1300e"/><rect x="158.0" y="618.5" width="7.3" height="114.4" fill="#dd3a12"/><path d="M158.0,618.5 L165.3,618.5 L168.9,615.0 L161.6,615.0 Z" fill="#c9350f"/><path d="M176.4,732.9 L180.0,729.4 L180.0,469.4 L176.4,472.9 Z" fill="#3d74d0"/><rect x="169.1" y="472.9" width="7.4" height="260.0" fill="#4785ea"/><path d="M169.1,472.9 L176.4,472.9 L180.0,469.4 L172.7,469.4 Z" fill="#3a6fc8"/><path d="M183.8,732.9 L187.3,729.4 L187.3,656.6 L183.8,660.1 Z" fill="#c1300e"/><rect x="176.4" y="660.1" width="7.3" height="72.8" fill="#dd3a12"/><path d="M176.4,660.1 L183.8,660.1 L187.3,656.6 L180.0,656.6 Z" fill="#c9350f"/><path d="M194.9,732.9 L198.5,729.4 L198.5,438.2 L194.9,441.7 Z" fill="#3d74d0"/><rect x="187.5" y="441.7" width="7.4" height="291.2" fill="#4785ea"/><path d="M187.5,441.7 L194.9,441.7 L198.5,438.2 L191.1,438.2 Z" fill="#3a6fc8"/><path d="M202.2,732.9 L205.8,729.4 L205.8,656.6 L202.2,660.1 Z" fill="#c1300e"/><rect x="194.9" y="660.1" width="7.3" height="72.8" fill="#dd3a12"/><path d="M194.9,660.1 L202.2,660.1 L205.8,656.6 L198.5,656.6 Z" fill="#c9350f"/><path d="M287.2,732.9 L290.8,729.4 L290.8,521.4 L287.2,524.9 Z" fill="#3d74d0"/><rect x="279.8" y="524.9" width="7.4" height="208.0" fill="#4785ea"/><path d="M279.8,524.9 L287.2,524.9 L290.8,521.4 L283.4,521.4 Z" fill="#3a6fc8"/><path d="M287.2,732.9 L294.5,732.9 L298.1,729.4 L290.8,729.4 Z" fill="#c9350f"/><path d="M305.6,732.9 L309.2,729.4 L309.2,469.4 L305.6,472.9 Z" fill="#3d74d0"/><rect x="298.2" y="472.9" width="7.4" height="260.0" fill="#4785ea"/><path d="M298.2,472.9 L305.6,472.9 L309.2,469.4 L301.8,469.4 Z" fill="#3a6fc8"/><path d="M312.9,732.9 L316.5,729.4 L316.5,635.8 L312.9,639.3 Z" fill="#c1300e"/><rect x="305.6" y="639.3" width="7.3" height="93.6" fill="#dd3a12"/><path d="M305.6,639.3 L312.9,639.3 L316.5,635.8 L309.2,635.8 Z" fill="#c9350f"/><path d="M324.1,732.9 L327.7,729.4 L327.7,448.6 L324.1,452.1 Z" fill="#3d74d0"/><rect x="316.7" y="452.1" width="7.4" height="280.8" fill="#4785ea"/><path d="M316.7,452.1 L324.1,452.1 L327.7,448.6 L320.3,448.6 Z" fill="#3a6fc8"/><path d="M331.4,732.9 L335.0,729.4 L335.0,625.4 L331.4,628.9 Z" fill="#c1300e"/><rect x="324.1" y="628.9" width="7.3" height="104.0" fill="#dd3a12"/><path d="M324.1,628.9 L331.4,628.9 L335.0,625.4 L327.7,625.4 Z" fill="#c9350f"/><path d="M342.5,732.9 L346.1,729.4 L346.1,500.6 L342.5,504.1 Z" fill="#3d74d0"/><rect x="335.1" y="504.1" width="7.4" height="228.8" fill="#4785ea"/><path d="M335.1,504.1 L342.5,504.1 L346.1,500.6 L338.7,500.6 Z" fill="#3a6fc8"/><path d="M349.8,732.9 L353.4,729.4 L353.4,677.4 L349.8,680.9 Z" fill="#c1300e"/><rect x="342.5" y="680.9" width="7.3" height="52.0" fill="#dd3a12"/><path d="M342.5,680.9 L349.8,680.9 L353.4,677.4 L346.1,677.4 Z" fill="#c9350f"/><path d="M379.4,732.9 L383.0,729.4 L383.0,469.4 L379.4,472.9 Z" fill="#3d74d0"/><rect x="372.0" y="472.9" width="7.4" height="260.0" fill="#4785ea"/><path d="M372.0,472.9 L379.4,472.9 L383.0,469.4 L375.6,469.4 Z" fill="#3a6fc8"/><path d="M386.7,732.9 L390.3,729.4 L390.3,687.8 L386.7,691.3 Z" fill="#c1300e"/><rect x="379.4" y="691.3" width="7.3" height="41.6" fill="#dd3a12"/><path d="M379.4,691.3 L386.7,691.3 L390.3,687.8 L383.0,687.8 Z" fill="#c9350f"/><path d="M397.8,732.9 L401.4,729.4 L401.4,479.8 L397.8,483.3 Z" fill="#3d74d0"/><rect x="390.4" y="483.3" width="7.4" height="249.6" fill="#4785ea"/><path d="M390.4,483.3 L397.8,483.3 L401.4,479.8 L394.1,479.8 Z" fill="#3a6fc8"/><path d="M405.1,732.9 L408.8,729.4 L408.8,677.4 L405.1,680.9 Z" fill="#c1300e"/><rect x="397.8" y="680.9" width="7.3" height="52.0" fill="#dd3a12"/><path d="M397.8,680.9 L405.1,680.9 L408.8,677.4 L401.4,677.4 Z" fill="#c9350f"/><path d="M416.3,732.9 L419.9,729.4 L419.9,469.4 L416.3,472.9 Z" fill="#3d74d0"/><rect x="408.9" y="472.9" width="7.4" height="260.0" fill="#4785ea"/><path d="M408.9,472.9 L416.3,472.9 L419.9,469.4 L412.5,469.4 Z" fill="#3a6fc8"/><path d="M423.6,732.9 L427.2,729.4 L427.2,698.2 L423.6,701.7 Z" fill="#c1300e"/><rect x="416.3" y="701.7" width="7.3" height="31.2" fill="#dd3a12"/><path d="M416.3,701.7 L423.6,701.7 L427.2,698.2 L419.9,698.2 Z" fill="#c9350f"/><path d="M434.8,732.9 L438.4,729.4 L438.4,479.8 L434.8,483.3 Z" fill="#3d74d0"/><rect x="427.4" y="483.3" width="7.4" height="249.6" fill="#4785ea"/><path d="M427.4,483.3 L434.8,483.3 L438.4,479.8 L431.0,479.8 Z" fill="#3a6fc8"/><path d="M442.1,732.9 L445.7,729.4 L445.7,698.2 L442.1,701.7 Z" fill="#c1300e"/><rect x="434.8" y="701.7" width="7.3" height="31.2" fill="#dd3a12"/><path d="M434.8,701.7 L442.1,701.7 L445.7,698.2 L438.4,698.2 Z" fill="#c9350f"/><path d="M453.2,732.9 L456.8,729.4 L456.8,500.6 L453.2,504.1 Z" fill="#3d74d0"/><rect x="445.8" y="504.1" width="7.4" height="228.8" fill="#4785ea"/><path d="M445.8,504.1 L453.2,504.1 L456.8,500.6 L449.4,500.6 Z" fill="#3a6fc8"/><path d="M460.5,732.9 L464.1,729.4 L464.1,719.0 L460.5,722.5 Z" fill="#c1300e"/><rect x="453.2" y="722.5" width="7.3" height="10.4" fill="#dd3a12"/><path d="M453.2,722.5 L460.5,722.5 L464.1,719.0 L456.8,719.0 Z" fill="#c9350f"/><path d="M527.0,732.9 L530.6,729.4 L530.6,459.0 L527.0,462.5 Z" fill="#3d74d0"/><rect x="519.6" y="462.5" width="7.4" height="270.4" fill="#4785ea"/><path d="M519.6,462.5 L527.0,462.5 L530.6,459.0 L523.2,459.0 Z" fill="#3a6fc8"/><path d="M534.3,732.9 L537.9,729.4 L537.9,708.6 L534.3,712.1 Z" fill="#c1300e"/><rect x="527.0" y="712.1" width="7.3" height="20.8" fill="#dd3a12"/><path d="M527.0,712.1 L534.3,712.1 L537.9,708.6 L530.6,708.6 Z" fill="#c9350f"/><path d="M545.5,732.9 L549.1,729.4 L549.1,417.4 L545.5,420.9 Z" fill="#3d74d0"/><rect x="538.0" y="420.9" width="7.4" height="312.0" fill="#4785ea"/><path d="M538.0,420.9 L545.5,420.9 L549.1,417.4 L541.6,417.4 Z" fill="#3a6fc8"/><path d="M552.8,732.9 L556.4,729.4 L556.4,719.0 L552.8,722.5 Z" fill="#c1300e"/><rect x="545.5" y="722.5" width="7.3" height="10.4" fill="#dd3a12"/><path d="M545.5,722.5 L552.8,722.5 L556.4,719.0 L549.1,719.0 Z" fill="#c9350f"/><path d="M563.9,732.9 L567.5,729.4 L567.5,479.8 L563.9,483.3 Z" fill="#3d74d0"/><rect x="556.5" y="483.3" width="7.4" height="249.6" fill="#4785ea"/><path d="M556.5,483.3 L563.9,483.3 L567.5,479.8 L560.1,479.8 Z" fill="#3a6fc8"/><path d="M571.2,732.9 L574.8,729.4 L574.8,667.0 L571.2,670.5 Z" fill="#c1300e"/><rect x="563.9" y="670.5" width="7.3" height="62.4" fill="#dd3a12"/><path d="M563.9,670.5 L571.2,670.5 L574.8,667.0 L567.5,667.0 Z" fill="#c9350f"/><path d="M582.4,732.9 L586.0,729.4 L586.0,459.0 L582.4,462.5 Z" fill="#3d74d0"/><rect x="574.9" y="462.5" width="7.4" height="270.4" fill="#4785ea"/><path d="M574.9,462.5 L582.4,462.5 L586.0,459.0 L578.5,459.0 Z" fill="#3a6fc8"/><path d="M589.6,732.9 L593.2,729.4 L593.2,667.0 L589.6,670.5 Z" fill="#c1300e"/><rect x="582.4" y="670.5" width="7.3" height="62.4" fill="#dd3a12"/><path d="M582.4,670.5 L589.6,670.5 L593.2,667.0 L586.0,667.0 Z" fill="#c9350f"/><path d="M637.7,732.9 L641.3,729.4 L641.3,469.4 L637.7,472.9 Z" fill="#3d74d0"/><rect x="630.3" y="472.9" width="7.4" height="260.0" fill="#4785ea"/><path d="M630.3,472.9 L637.7,472.9 L641.3,469.4 L633.9,469.4 Z" fill="#3a6fc8"/><path d="M645.0,732.9 L648.6,729.4 L648.6,719.0 L645.0,722.5 Z" fill="#c1300e"/><rect x="637.7" y="722.5" width="7.3" height="10.4" fill="#dd3a12"/><path d="M637.7,722.5 L645.0,722.5 L648.6,719.0 L641.3,719.0 Z" fill="#c9350f"/><path d="M656.2,732.9 L659.8,729.4 L659.8,427.8 L656.2,431.3 Z" fill="#3d74d0"/><rect x="648.8" y="431.3" width="7.4" height="301.6" fill="#4785ea"/><path d="M648.8,431.3 L656.2,431.3 L659.8,427.8 L652.4,427.8 Z" fill="#3a6fc8"/><path d="M663.5,732.9 L667.1,729.4 L667.1,677.4 L663.5,680.9 Z" fill="#c1300e"/><rect x="656.2" y="680.9" width="7.3" height="52.0" fill="#dd3a12"/><path d="M656.2,680.9 L663.5,680.9 L667.1,677.4 L659.8,677.4 Z" fill="#c9350f"/><path d="M674.6,732.9 L678.2,729.4 L678.2,427.8 L674.6,431.3 Z" fill="#3d74d0"/><rect x="667.2" y="431.3" width="7.4" height="301.6" fill="#4785ea"/><path d="M667.2,431.3 L674.6,431.3 L678.2,427.8 L670.8,427.8 Z" fill="#3a6fc8"/><path d="M681.9,732.9 L685.5,729.4 L685.5,687.8 L681.9,691.3 Z" fill="#c1300e"/><rect x="674.6" y="691.3" width="7.3" height="41.6" fill="#dd3a12"/><path d="M674.6,691.3 L681.9,691.3 L685.5,687.8 L678.2,687.8 Z" fill="#c9350f"/><path d="M693.0,732.9 L696.6,729.4 L696.6,469.4 L693.0,472.9 Z" fill="#3d74d0"/><rect x="685.6" y="472.9" width="7.4" height="260.0" fill="#4785ea"/><path d="M685.6,472.9 L693.0,472.9 L696.6,469.4 L689.2,469.4 Z" fill="#3a6fc8"/><path d="M700.3,732.9 L703.9,729.4 L703.9,687.8 L700.3,691.3 Z" fill="#c1300e"/><rect x="693.0" y="691.3" width="7.3" height="41.6" fill="#dd3a12"/><path d="M693.0,691.3 L700.3,691.3 L703.9,687.8 L696.6,687.8 Z" fill="#c9350f"/><path d="M711.5,732.9 L715.1,729.4 L715.1,500.6 L711.5,504.1 Z" fill="#3d74d0"/><rect x="704.1" y="504.1" width="7.4" height="228.8" fill="#4785ea"/><path d="M704.1,504.1 L711.5,504.1 L715.1,500.6 L707.7,500.6 Z" fill="#3a6fc8"/><path d="M718.8,732.9 L722.4,729.4 L722.4,719.0 L718.8,722.5 Z" fill="#c1300e"/><rect x="711.5" y="722.5" width="7.3" height="10.4" fill="#dd3a12"/><path d="M711.5,722.5 L718.8,722.5 L722.4,719.0 L715.1,719.0 Z" fill="#c9350f"/><path d="M766.9,732.9 L770.5,729.4 L770.5,396.6 L766.9,400.1 Z" fill="#3d74d0"/><rect x="759.5" y="400.1" width="7.4" height="332.8" fill="#4785ea"/><path d="M759.5,400.1 L766.9,400.1 L770.5,396.6 L763.1,396.6 Z" fill="#3a6fc8"/><path d="M774.2,732.9 L777.8,729.4 L777.8,687.8 L774.2,691.3 Z" fill="#c1300e"/><rect x="766.9" y="691.3" width="7.3" height="41.6" fill="#dd3a12"/><path d="M766.9,691.3 L774.2,691.3 L777.8,687.8 L770.5,687.8 Z" fill="#c9350f"/><path d="M785.3,732.9 L788.9,729.4 L788.9,531.8 L785.3,535.3 Z" fill="#3d74d0"/><rect x="777.9" y="535.3" width="7.4" height="197.6" fill="#4785ea"/><path d="M777.9,535.3 L785.3,535.3 L788.9,531.8 L781.5,531.8 Z" fill="#3a6fc8"/><path d="M792.6,732.9 L796.2,729.4 L796.2,687.8 L792.6,691.3 Z" fill="#c1300e"/><rect x="785.3" y="691.3" width="7.3" height="41.6" fill="#dd3a12"/><path d="M785.3,691.3 L792.6,691.3 L796.2,687.8 L788.9,687.8 Z" fill="#c9350f"/><path d="M803.8,732.9 L807.4,729.4 L807.4,500.6 L803.8,504.1 Z" fill="#3d74d0"/><rect x="796.3" y="504.1" width="7.4" height="228.8" fill="#4785ea"/><path d="M796.3,504.1 L803.8,504.1 L807.4,500.6 L799.9,500.6 Z" fill="#3a6fc8"/><path d="M811.0,732.9 L814.6,729.4 L814.6,687.8 L811.0,691.3 Z" fill="#c1300e"/><rect x="803.8" y="691.3" width="7.3" height="41.6" fill="#dd3a12"/><path d="M803.8,691.3 L811.0,691.3 L814.6,687.8 L807.4,687.8 Z" fill="#c9350f"/><path d="M822.2,732.9 L825.8,729.4 L825.8,500.6 L822.2,504.1 Z" fill="#3d74d0"/><rect x="814.8" y="504.1" width="7.4" height="228.8" fill="#4785ea"/><path d="M814.8,504.1 L822.2,504.1 L825.8,500.6 L818.4,500.6 Z" fill="#3a6fc8"/><path d="M829.5,732.9 L833.1,729.4 L833.1,698.2 L829.5,701.7 Z" fill="#c1300e"/><rect x="822.2" y="701.7" width="7.3" height="31.2" fill="#dd3a12"/><path d="M822.2,701.7 L829.5,701.7 L833.1,698.2 L825.8,698.2 Z" fill="#c9350f"/><path d="M840.7,732.9 L844.3,729.4 L844.3,573.4 L840.7,576.9 Z" fill="#3d74d0"/><rect x="833.2" y="576.9" width="7.4" height="156.0" fill="#4785ea"/><path d="M833.2,576.9 L840.7,576.9 L844.3,573.4 L836.9,573.4 Z" fill="#3a6fc8"/><path d="M848.0,732.9 L851.6,729.4 L851.6,708.6 L848.0,712.1 Z" fill="#c1300e"/><rect x="840.7" y="712.1" width="7.3" height="20.8" fill="#dd3a12"/><path d="M840.7,712.1 L848.0,712.1 L851.6,708.6 L844.3,708.6 Z" fill="#c9350f"/><path d="M896.0,732.9 L899.6,729.4 L899.6,469.4 L896.0,472.9 Z" fill="#3d74d0"/><rect x="888.6" y="472.9" width="7.4" height="260.0" fill="#4785ea"/><path d="M888.6,472.9 L896.0,472.9 L899.6,469.4 L892.2,469.4 Z" fill="#3a6fc8"/><path d="M903.3,732.9 L906.9,729.4 L906.9,708.6 L903.3,712.1 Z" fill="#c1300e"/><rect x="896.0" y="712.1" width="7.3" height="20.8" fill="#dd3a12"/><path d="M896.0,712.1 L903.3,712.1 L906.9,708.6 L899.6,708.6 Z" fill="#c9350f"/><path d="M914.5,732.9 L918.1,729.4 L918.1,438.2 L914.5,441.7 Z" fill="#3d74d0"/><rect x="907.0" y="441.7" width="7.4" height="291.2" fill="#4785ea"/><path d="M907.0,441.7 L914.5,441.7 L918.1,438.2 L910.6,438.2 Z" fill="#3a6fc8"/><path d="M921.8,732.9 L925.4,729.4 L925.4,719.0 L921.8,722.5 Z" fill="#c1300e"/><rect x="914.5" y="722.5" width="7.3" height="10.4" fill="#dd3a12"/><path d="M914.5,722.5 L921.8,722.5 L925.4,719.0 L918.1,719.0 Z" fill="#c9350f"/><path d="M932.9,732.9 L936.5,729.4 L936.5,313.4 L932.9,316.9 Z" fill="#3d74d0"/><rect x="925.5" y="316.9" width="7.4" height="416.0" fill="#4785ea"/><path d="M925.5,316.9 L932.9,316.9 L936.5,313.4 L929.1,313.4 Z" fill="#3a6fc8"/><path d="M932.9,732.9 L940.2,732.9 L943.8,729.4 L936.5,729.4 Z" fill="#c9350f"/><text x="132.500" y="742.9" text-anchor="end" font-size="26.5" fill="#000">0</text><text x="132.500" y="638.9" text-anchor="end" font-size="26.5" fill="#000">10</text><text transform="translate(85,618) rotate(-90)" font-size="24" fill="#000">Количество заявок</text><text transform="translate(157.8,742.7) rotate(-45)" text-anchor="end" font-size="9.200" fill="#000" stroke="#000" stroke-width="0.25">2010-02-17</text><text transform="translate(176.3,742.7) rotate(-45)" text-anchor="end" font-size="9.200" fill="#000" stroke="#000" stroke-width="0.25">2010-02-18</text><text transform="translate(194.7,742.7) rotate(-45)" text-anchor="end" font-size="9.200" fill="#000" stroke="#000" stroke-width="0.25">2010-02-19</text><text transform="translate(213.2,742.7) rotate(-45)" text-anchor="end" font-size="9.200" fill="#000" stroke="#000" stroke-width="0.25">2010-02-20</text><text transform="translate(231.6,742.7) rotate(-45)" text-anchor="end" font-size="9.200" fill="#000" stroke="#000" stroke-width="0.25">2010-02-21</text><text transform="translate(250.1,742.7) rotate(-45)" text-anchor="end" font-size="9.200" fill="#000" stroke="#000" stroke-width="0.25">2010-02-22</text><text transform="translate(268.5,742.7) rotate(-45)" text-anchor="end" font-size="9.200" fill="#000" stroke="#000" stroke-width="0.25">2010-02-23</text><text transform="translate(287.0,742.7) rotate(-45)" text-anchor="end" font-size="9.200" fill="#000" stroke="#000" stroke-width="0.25">2010-02-24</text><text transform="translate(305.4,742.7) rotate(-45)" text-anchor="end" font-size="9.200" fill="#000" stroke="#000" stroke-width="0.25">2010-02-25</text><text transform="translate(323.9,742.7) rotate(-45)" text-anchor="end" font-size="9.200" fill="#000" stroke="#000" stroke-width="0.25">2010-02-26</text><text transform="translate(342.3,742.7) rotate(-45)" text-anchor="end" font-size="9.200" fill="#000" stroke="#000" stroke-width="0.25">2010-02-27</text><text transform="translate(360.8,742.7) rotate(-45)" text-anchor="end" font-size="9.200" fill="#000" stroke="#000" stroke-width="0.25">2010-02-28</text><text transform="translate(379.2,742.7) rotate(-45)" text-anchor="end" font-size="9.200" fill="#000" stroke="#000" stroke-width="0.25">2010-03-01</text><text transform="translate(397.7,742.7) rotate(-45)" text-anchor="end" font-size="9.200" fill="#000" stroke="#000" stroke-width="0.25">2010-03-02</text><text transform="translate(416.1,742.7) rotate(-45)" text-anchor="end" font-size="9.200" fill="#000" stroke="#000" stroke-width="0.25">2010-03-03</text><text transform="translate(434.6,742.7) rotate(-45)" text-anchor="end" font-size="9.200" fill="#000" stroke="#000" stroke-width="0.25">2010-03-04</text><text transform="translate(453.0,742.7) rotate(-45)" text-anchor="end" font-size="9.200" fill="#000" stroke="#000" stroke-width="0.25">2010-03-05</text><text transform="translate(471.5,742.7) rotate(-45)" text-anchor="end" font-size="9.200" fill="#000" stroke="#000" stroke-width="0.25">2010-03-06</text><text transform="translate(489.9,742.7) rotate(-45)" text-anchor="end" font-size="9.200" fill="#000" stroke="#000" stroke-width="0.25">2010-03-07</text><text transform="translate(508.4,742.7) rotate(-45)" text-anchor="end" font-size="9.200" fill="#000" stroke="#000" stroke-width="0.25">2010-03-08</text><text transform="translate(526.8,742.7) rotate(-45)" text-anchor="end" font-size="9.200" fill="#000" stroke="#000" stroke-width="0.25">2010-03-09</text><text transform="translate(545.3,742.7) rotate(-45)" text-anchor="end" font-size="9.200" fill="#000" stroke="#000" stroke-width="0.25">2010-03-10</text><text transform="translate(563.7,742.7) rotate(-45)" text-anchor="end" font-size="9.200" fill="#000" stroke="#000" stroke-width="0.25">2010-03-11</text><text transform="translate(582.2,742.7) rotate(-45)" text-anchor="end" font-size="9.200" fill="#000" stroke="#000" stroke-width="0.25">2010-03-12</text><text transform="translate(600.6,742.7) rotate(-45)" text-anchor="end" font-size="9.200" fill="#000" stroke="#000" stroke-width="0.25">2010-03-13</text><text transform="translate(619.1,742.7) rotate(-45)" text-anchor="end" font-size="9.200" fill="#000" stroke="#000" stroke-width="0.25">2010-03-14</text><text transform="translate(637.5,742.7) rotate(-45)" text-anchor="end" font-size="9.200" fill="#000" stroke="#000" stroke-width="0.25">2010-03-15</text><text transform="translate(656.0,742.7) rotate(-45)" text-anchor="end" font-size="9.200" fill="#000" stroke="#000" stroke-width="0.25">2010-03-16</text><text transform="translate(674.4,742.7) rotate(-45)" text-anchor="end" font-size="9.200" fill="#000" stroke="#000" stroke-width="0.25">2010-03-17</text><text transform="translate(692.9,742.7) rotate(-45)" text-anchor="end" font-size="9.200" fill="#000" stroke="#000" stroke-width="0.25">2010-03-18</text><text transform="translate(711.3,742.7) rotate(-45)" text-anchor="end" font-size="9.200" fill="#000" stroke="#000" stroke-width="0.25">2010-03-19</text><text transform="translate(729.8,742.7) rotate(-45)" text-anchor="end" font-size="9.200" fill="#000" stroke="#000" stroke-width="0.25">2010-03-20</text><text transform="translate(748.2,742.7) rotate(-45)" text-anchor="end" font-size="9.200" fill="#000" stroke="#000" stroke-width="0.25">2010-03-21</text><text transform="translate(766.7,742.7) rotate(-45)" text-anchor="end" font-size="9.200" fill="#000" stroke="#000" stroke-width="0.25">2010-03-22</text><text transform="translate(785.1,742.7) rotate(-45)" text-anchor="end" font-size="9.200" fill="#000" stroke="#000" stroke-width="0.25">2010-03-23</text><text transform="translate(803.6,742.7) rotate(-45)" text-anchor="end" font-size="9.200" fill="#000" stroke="#000" stroke-width="0.25">2010-03-24</text><text transform="translate(822.0,742.7) rotate(-45)" text-anchor="end" font-size="9.200" fill="#000" stroke="#000" stroke-width="0.25">2010-03-25</text><text transform="translate(840.5,742.7) rotate(-45)" text-anchor="end" font-size="9.200" fill="#000" stroke="#000" stroke-width="0.25">2010-03-26</text><text transform="translate(858.9,742.7) rotate(-45)" text-anchor="end" font-size="9.200" fill="#000" stroke="#000" stroke-width="0.25">2010-03-27</text><text transform="translate(877.4,742.7) rotate(-45)" text-anchor="end" font-size="9.200" fill="#000" stroke="#000" stroke-width="0.25">2010-03-28</text><text transform="translate(895.8,742.7) rotate(-45)" text-anchor="end" font-size="9.200" fill="#000" stroke="#000" stroke-width="0.25">2010-03-29</text><text transform="translate(914.3,742.7) rotate(-45)" text-anchor="end" font-size="9.200" fill="#000" stroke="#000" stroke-width="0.25">2010-03-30</text><text transform="translate(932.7,742.7) rotate(-45)" text-anchor="end" font-size="9.200" fill="#000" stroke="#000" stroke-width="0.25">2010-03-31</text><rect x="978" y="512" width="23" height="23" fill="#4785ea"/><rect x="978" y="551" width="23" height="23" fill="#dd3a12"/><text id="lg1" x="1004" y="531.500" font-size="23" fill="#000">Сделано</text><text id="lg2" x="1004" y="570.500" font-size="23" fill="#000">Не сделано</text></svg>
<div class="abs" style="left:39px;top:162px;width:363px;height:430px;background:#fff;border:1px solid #cfcfcf;box-shadow:0 2px 5px rgba(0,0,0,0.25);"></div>
<div class="abs" style="left:40px;top:158px;width:46px;height:6px;background:#fff;"></div>
<div class="abs" style="left:41px;top:432px;width:360px;height:28px;background:#eeeeee;"></div>
<div class="abs" style="left:41px;top:203px;width:360px;height:1px;background:#e6e6e6;"></div>
<div class="abs" style="left:41px;top:357px;width:360px;height:1px;background:#e6e6e6;"></div>
<div class="abs" style="left:41px;top:425px;width:360px;height:1px;background:#e6e6e6;"></div>
<div class="abs" style="left:41px;top:550px;width:360px;height:1px;background:#e6e6e6;"></div>
<div class="t mi" style="left:70px;top:176px;font-size:13px;line-height:15px;color:#3c3c3c;letter-spacing:-0.06px">Совместный доступ...</div>
<div class="t mi" style="left:70px;top:217px;font-size:13px;line-height:15px;color:#3c3c3c;letter-spacing:-0.06px">Создать</div>
<svg width="8" height="8" style="left:383px;top:221px"><path d="M0,0 L6,3.5 L0,7 Z" fill="#8a8a8a"/></svg>
<div class="t mi" style="left:70px;top:245px;font-size:13px;line-height:15px;color:#3c3c3c;letter-spacing:-0.06px">Открыть...</div>
<div class="t ma" style="right:1285px;top:245px;font-size:13px;line-height:15px;color:#8a8a8a;letter-spacing:0px">Ctrl+O</div>
<div class="t mi" style="left:70px;top:273px;font-size:13px;line-height:15px;color:#cfcfcf;letter-spacing:-0.06px">Переименовать...</div>
<div class="t mi" style="left:70px;top:301px;font-size:13px;line-height:15px;color:#3c3c3c;letter-spacing:-0.06px">Создать копию...</div>
<div class="t mi" style="left:70px;top:329px;font-size:13px;line-height:15px;color:#3c3c3c;letter-spacing:-0.06px">Импорт...</div>
<div class="t mi" style="left:70px;top:370px;font-size:13px;line-height:15px;color:#cfcfcf;letter-spacing:-0.06px">Просмотреть историю изменений</div>
<div class="t ma" style="right:1285px;top:370px;font-size:13px;line-height:15px;color:#cfcfcf;letter-spacing:0px">Ctrl+Alt+Shift+G</div>
<div class="t mi" style="left:70px;top:398px;font-size:13px;line-height:15px;color:#cfcfcf;letter-spacing:-0.06px">Настройки таблицы...</div>
<div class="t mi" style="left:70px;top:439px;font-size:13px;line-height:15px;color:#3c3c3c;letter-spacing:-0.06px">Скачать как</div>
<svg width="8" height="8" style="left:383px;top:443px"><path d="M0,0 L6,3.5 L0,7 Z" fill="#111"/></svg>
<div class="t mi" style="left:70px;top:467px;font-size:13px;line-height:15px;color:#cfcfcf;letter-spacing:-0.06px">Опубликовать в Интернете...</div>
<div class="t mi" style="left:70px;top:495px;font-size:13px;line-height:15px;color:#3c3c3c;letter-spacing:-0.06px">Отправить соавторам...</div>
<div class="t mi" style="left:70px;top:523px;font-size:13px;line-height:15px;color:#3c3c3c;letter-spacing:-0.06px">Прикрепить к сообщению эл. почты...</div>
<div class="t mi" style="left:70px;top:564px;font-size:13px;line-height:15px;color:#3c3c3c;letter-spacing:-0.06px">Печать</div>
<div class="t ma" style="right:1285px;top:564px;font-size:13px;line-height:15px;color:#8a8a8a;letter-spacing:0px">Ctrl+P</div>
<svg width="15" height="12" style="left:46px;top:565px"><rect x="3" y="0" width="9" height="2.500" fill="#444"/><rect x="0" y="3.500" width="15" height="6" rx="1" fill="#444"/><rect x="3" y="7" width="9" height="5" fill="#fff" stroke="#444" stroke-width="1.2"/></svg>
<div class="abs" style="left:402px;top:432px;width:384px;height:181px;background:#fff;border:1px solid #cfcfcf;box-shadow:0 2px 5px rgba(0,0,0,0.25);"></div>
<div class="abs" style="left:403px;top:439px;width:382px;height:28px;background:#eeeeee;"></div>
<div class="t si" style="left:418px;top:446px;font-size:13px;line-height:15px;color:#3c3c3c;letter-spacing:-0.06px">Microsoft Excel (.xlsx)</div>
<div class="t si" style="left:418px;top:474px;font-size:13px;line-height:15px;color:#3c3c3c;letter-spacing:-0.06px">OpenDocument Format (ODS)</div>
<div class="t si" style="left:418px;top:502px;font-size:13px;line-height:15px;color:#3c3c3c;letter-spacing:-0.06px">Документ PDF</div>
<div class="t si" style="left:418px;top:530px;font-size:13px;line-height:15px;color:#3c3c3c;letter-spacing:-0.06px">Текст с разделителями-запятыми (.csv, текущий лист)</div>
<div class="t si" style="left:418px;top:558px;font-size:13px;line-height:15px;color:#3c3c3c;letter-spacing:-0.06px">Текст без форматирования (TXT, текущий лист)</div>
<div class="t si" style="left:418px;top:586px;font-size:13px;line-height:15px;color:#3c3c3c;letter-spacing:-0.06px">Веб-страница (HTML, текущий лист)</div>
<div class="abs" style="left:51px;top:464px;width:718px;height:5px;background:linear-gradient(#ee1c25 0,#ee1c25 65%,#c4232c 100%);border-radius:2.5px;"></div>
<div class="abs" style="left:0;top:976px;width:1680px;height:30px;background:#f4f4f4;border-bottom:1px solid #e2e2e2"></div>
<svg width="40" height="14" style="left:47px;top:982px"><path d="M1,7 h11 M6.500,1.500 v11" stroke="#555" stroke-width="2" fill="none"/><g fill="#555"><rect x="28" y="1" width="12" height="2"/><rect x="28" y="4.500" width="12" height="2"/><rect x="28" y="8" width="12" height="2"/><rect x="28" y="11.500" width="12" height="2"/></g></svg>
<div class="abs" style="left:107px;top:976px;width:121px;height:25px;background:#fff;border:1px solid #dcdcdc;border-top:none;box-shadow:0 1px 1px rgba(0,0,0,0.08);"></div>
<svg width="13" height="14" style="left:115px;top:980px"><path d="M3,6 V3.500 A3.500,3 0 0 1 10,3.500 V6" stroke="#666" stroke-width="1.2" fill="none"/><rect x="0.6" y="5.600" width="11.800" height="7.800" fill="#ddd" stroke="#666" stroke-width="1.2"/><path d="M4.500,8 h4 v2 l-2,2 l-2,-2 Z" fill="#666"/></svg>
<div class="t st" style="left:132px;top:982px;font-size:13px;font-weight:bold;color:#222;line-height:15px;">Статистика</div>
<svg width="9" height="6" style="left:210px;top:987px"><path d="M0,0 L8,0 L4,5 Z" fill="#1a4ba0"/></svg>
<div class="t st" style="left:235px;top:982px;font-size:13px;color:#777;line-height:15px;">Sheet54</div>
<div class="abs" style="left:290px;top:976px;width:1px;height:24px;background:#dedede"></div>
<svg width="13" height="14" style="left:297px;top:980px"><path d="M3,6 V3.500 A3.500,3 0 0 1 10,3.500 V6" stroke="#707070" stroke-width="1.2" fill="none"/><rect x="0.6" y="5.600" width="11.800" height="7.800" fill="#ddd" stroke="#707070" stroke-width="1.2"/><path d="M4.500,8 h4 v2 l-2,2 l-2,-2 Z" fill="#707070"/></svg>
<div class="t st" style="left:314px;top:982px;font-size:13px;color:#848484;line-height:15px;">12.02.2010</div>
<div class="abs" style="left:385px;top:976px;width:1px;height:24px;background:#dedede"></div>
<svg width="13" height="14" style="left:392px;top:980px"><path d="M3,6 V3.500 A3.500,3 0 0 1 10,3.500 V6" stroke="#707070" stroke-width="1.2" fill="none"/><rect x="0.6" y="5.600" width="11.800" height="7.800" fill="#ddd" stroke="#707070" stroke-width="1.2"/><path d="M4.500,8 h4 v2 l-2,2 l-2,-2 Z" fill="#707070"/></svg>
<div class="t st" style="left:409px;top:982px;font-size:13px;color:#848484;line-height:15px;">15.02.2010</div>
<div class="abs" style="left:480px;top:976px;width:1px;height:24px;background:#dedede"></div>
<svg width="13" height="14" style="left:487px;top:980px"><path d="M3,6 V3.500 A3.500,3 0 0 1 10,3.500 V6" stroke="#707070" stroke-width="1.2" fill="none"/><rect x="0.6" y="5.600" width="11.800" height="7.800" fill="#ddd" stroke="#707070" stroke-width="1.2"/><path d="M4.500,8 h4 v2 l-2,2 l-2,-2 Z" fill="#707070"/></svg>
<div class="t st" style="left:504px;top:982px;font-size:13px;color:#848484;line-height:15px;">16.02.2010</div>
<div class="abs" style="left:575px;top:976px;width:1px;height:24px;background:#dedede"></div>
<svg width="13" height="14" style="left:582px;top:980px"><path d="M3,6 V3.500 A3.500,3 0 0 1 10,3.500 V6" stroke="#707070" stroke-width="1.2" fill="none"/><rect x="0.6" y="5.600" width="11.800" height="7.800" fill="#ddd" stroke="#707070" stroke-width="1.2"/><path d="M4.500,8 h4 v2 l-2,2 l-2,-2 Z" fill="#707070"/></svg>
<div class="t st" style="left:599px;top:982px;font-size:13px;color:#848484;line-height:15px;">17.02.2010</div>
<div class="abs" style="left:670px;top:976px;width:1px;height:24px;background:#dedede"></div>
<svg width="13" height="14" style="left:677px;top:980px"><path d="M3,6 V3.500 A3.500,3 0 0 1 10,3.500 V6" stroke="#707070" stroke-width="1.2" fill="none"/><rect x="0.6" y="5.600" width="11.800" height="7.800" fill="#ddd" stroke="#707070" stroke-width="1.2"/><path d="M4.500,8 h4 v2 l-2,2 l-2,-2 Z" fill="#707070"/></svg>
<div class="t st" style="left:694px;top:982px;font-size:13px;color:#848484;line-height:15px;">18.02.2010</div>
<div class="abs" style="left:765px;top:976px;width:1px;height:24px;background:#dedede"></div>
<svg width="13" height="14" style="left:772px;top:980px"><path d="M3,6 V3.500 A3.500,3 0 0 1 10,3.500 V6" stroke="#707070" stroke-width="1.2" fill="none"/><rect x="0.6" y="5.600" width="11.800" height="7.800" fill="#ddd" stroke="#707070" stroke-width="1.2"/><path d="M4.500,8 h4 v2 l-2,2 l-2,-2 Z" fill="#707070"/></svg>
<div class="t st" style="left:789px;top:982px;font-size:13px;color:#848484;line-height:15px;">19.02.2010</div>
<div class="abs" style="left:860px;top:976px;width:1px;height:24px;background:#dedede"></div>
<svg width="13" height="14" style="left:867px;top:980px"><path d="M3,6 V3.500 A3.500,3 0 0 1 10,3.500 V6" stroke="#707070" stroke-width="1.2" fill="none"/><rect x="0.6" y="5.600" width="11.800" height="7.800" fill="#ddd" stroke="#707070" stroke-width="1.2"/><path d="M4.500,8 h4 v2 l-2,2 l-2,-2 Z" fill="#707070"/></svg>
<div class="t st" style="left:884px;top:982px;font-size:13px;color:#848484;line-height:15px;">24.02.2010</div>
<div class="abs" style="left:955px;top:976px;width:1px;height:24px;background:#dedede"></div>
<svg width="13" height="14" style="left:962px;top:980px"><path d="M3,6 V3.500 A3.500,3 0 0 1 10,3.500 V6" stroke="#707070" stroke-width="1.2" fill="none"/><rect x="0.6" y="5.600" width="11.800" height="7.800" fill="#ddd" stroke="#707070" stroke-width="1.2"/><path d="M4.500,8 h4 v2 l-2,2 l-2,-2 Z" fill="#707070"/></svg>
<div class="t st" style="left:979px;top:982px;font-size:13px;color:#848484;line-height:15px;">25.02.2010</div>
<div class="abs" style="left:1050px;top:976px;width:1px;height:24px;background:#dedede"></div>
<svg width="13" height="14" style="left:1057px;top:980px"><path d="M3,6 V3.500 A3.500,3 0 0 1 10,3.500 V6" stroke="#707070" stroke-width="1.2" fill="none"/><rect x="0.6" y="5.600" width="11.800" height="7.800" fill="#ddd" stroke="#707070" stroke-width="1.2"/><path d="M4.500,8 h4 v2 l-2,2 l-2,-2 Z" fill="#707070"/></svg>
<div class="t st" style="left:1074px;top:982px;font-size:13px;color:#848484;line-height:15px;">26.02.2010</div>
<div class="abs" style="left:1145px;top:976px;width:1px;height:24px;background:#dedede"></div>
<svg width="13" height="14" style="left:1152px;top:980px"><path d="M3,6 V3.500 A3.500,3 0 0 1 10,3.500 V6" stroke="#707070" stroke-width="1.2" fill="none"/><rect x="0.6" y="5.600" width="11.800" height="7.800" fill="#ddd" stroke="#707070" stroke-width="1.2"/><path d="M4.500,8 h4 v2 l-2,2 l-2,-2 Z" fill="#707070"/></svg>
<div class="t st" style="left:1169px;top:982px;font-size:13px;color:#848484;line-height:15px;">27.02.2010</div>
<div class="abs" style="left:1240px;top:976px;width:1px;height:24px;background:#dedede"></div>
<svg width="13" height="14" style="left:1247px;top:980px"><path d="M3,6 V3.500 A3.500,3 0 0 1 10,3.500 V6" stroke="#707070" stroke-width="1.2" fill="none"/><rect x="0.6" y="5.600" width="11.800" height="7.800" fill="#ddd" stroke="#707070" stroke-width="1.2"/><path d="M4.500,8 h4 v2 l-2,2 l-2,-2 Z" fill="#707070"/></svg>
<div class="t st" style="left:1264px;top:982px;font-size:13px;color:#848484;line-height:15px;">01.03.2010</div>
<div class="abs" style="left:1335px;top:976px;width:1px;height:24px;background:#dedede"></div>
<svg width="13" height="14" style="left:1342px;top:980px"><path d="M3,6 V3.500 A3.500,3 0 0 1 10,3.500 V6" stroke="#707070" stroke-width="1.2" fill="none"/><rect x="0.6" y="5.600" width="11.800" height="7.800" fill="#ddd" stroke="#707070" stroke-width="1.2"/><path d="M4.500,8 h4 v2 l-2,2 l-2,-2 Z" fill="#707070"/></svg>
<div class="t st" style="left:1359px;top:982px;font-size:13px;color:#848484;line-height:15px;">02.03.2010</div>
<div class="abs" style="left:1430px;top:979px;width:1px;height:20px;background:#e0e0e0"></div>
<div class="abs" style="left:1434px;top:976px;width:6px;height:29px;background:linear-gradient(90deg,#e2e2e2,#f0f0f0)"></div>
<svg width="40" height="12" style="left:1450px;top:983px"><path d="M8,0 L8,11 L2,5.500 Z" fill="#555"/><path d="M30,0 L30,11 L36,5.500 Z" fill="#555"/></svg>
<div class="abs" style="left:1515px;top:976px;width:1px;height:29px;background:#dcdcdc"></div>
<div class="abs" style="left:0;top:1006px;width:1680px;height:44px;background:#d4d0c8;border-top:1px solid #fff;"></div>
<div class="abs" style="left:0;top:1005px;width:1680px;height:1px;background:#d4d0c8;"></div>
<div class="abs" style="left:2px;top:1010px;width:51px;height:38px;background:#d4d0c8;border:1px solid;border-color:#fff #404040 #404040 #fff;box-shadow:inset -1px -1px 0 #808080;"></div>
<svg width="16" height="16" style="left:5px;top:1020px"><path d="M1,2 Q4,0 7,2 L6,7.500 Q3,5.500 0,7.500 Z" fill="#e5492b"/><path d="M8.500,2.500 Q11.500,4.500 14.500,2.500 L13.500,8 Q10.500,10 7.500,8 Z" fill="#6dbb3a"/><path d="M0,9 Q3,7 6,9 L5,14.500 Q2,12.500 -1,14.500 Z" fill="#3b7fd9"/><path d="M7.200,9.500 Q10.200,11.500 13.200,9.500 L12.200,15 Q9.200,17 6.200,15 Z" fill="#f2c21b"/></svg>
<div class="t" id="pusk" style="left:21px;top:1022px;font-size:11.500px;font-weight:bold;color:#000;line-height:14px">Пуск</div>
<svg width="34" height="32" style="left:70px;top:1013px"><path d="M1,6 Q1,4 3,4 L11,4 L13,7 L29,7 Q31,7 31,9 L31,26 L1,26 Z" fill="#f2d67a" stroke="#c9a63c"/><rect x="3" y="9" width="27" height="9" fill="#fbeeb6"/><path d="M6,18 h20 q2,0 2,2 v10 h-5 v-6 h-14 v6 h-5 v-10 q0,-2 2,-2 Z" fill="#7fc4ee" stroke="#4c9bd0"/><rect x="6" y="5" width="3" height="2" fill="#d9534f"/><rect x="17" y="9" width="3" height="2" fill="#5cb85c"/></svg>
<div class="abs" style="left:112px;top:1010px;width:48px;height:38px;background:#fff;border:1px solid;border-color:#404040 #fff #fff #404040;box-shadow:inset 1px 1px 0 #808080;"></div>
<svg width="32" height="32" viewBox="-1.500 -1.500 35 35" style="left:120px;top:1013px"><circle cx="16" cy="16" r="15" fill="#dd4b3e"/><path d="M16,16 L2.900,23.500 A15,15 0 0 0 20,30.500 Z" fill="#1da362"/><path d="M16,16 L3,8.500 A15,15 0 0 0 2.900,23.500 Z" fill="#1da362"/><path d="M16,16 L29,8.500 A15,15 0 0 1 20,30.500 L16,22 Z" fill="#fcd242"/><path d="M16,16 L29,8.500 A15,15 0 0 1 31,16 Z" fill="#fcd242"/><circle cx="16" cy="16" r="7" fill="#fff"/><circle cx="16" cy="16" r="5.500" fill="#4a8af4"/></svg>
<div class="abs" style="left:162px;top:1010px;width:48px;height:38px;background:#d4d0c8;border:1px solid;border-color:#fff #404040 #404040 #fff;box-shadow:inset -1px -1px 0 #808080;"></div>
<svg width="34" height="32" style="left:169px;top:1013px"><rect x="2" y="2" width="20" height="24" rx="2" fill="#fbe3a4" stroke="#e3a53a"/><path d="M8,10 L32,8 L32,24 L8,27 Z" fill="#fbe7a6" stroke="#d9a63a"/><path d="M8,10 L20,19 L32,8" fill="none" stroke="#d9a63a"/><circle cx="20" cy="21" r="7" fill="#f7d36b" stroke="#e09b1a" stroke-width="1.5"/><path d="M20,17 v4.500 l3,1.500" stroke="#fff" stroke-width="1.600" fill="none"/></svg>
<div class="abs" style="left:212px;top:1010px;width:44px;height:38px;background:#d4d0c8;border:1px solid;border-color:#fff #404040 #404040 #fff;box-shadow:inset -1px -1px 0 #808080;"></div>
<svg width="34" height="34" style="left:217px;top:1012px"><rect x="12" y="1" width="20" height="17" rx="4" fill="#fff" stroke="#8aa7c9" stroke-width="1.500"/><path d="M24,18 l2,5 l3,-5 Z" fill="#fff" stroke="#8aa7c9"/><path d="M2,32 Q0,12 9,7 Q18,5 19,16 Q24,24 22,32 Z" fill="#7a4f9e"/><circle cx="8" cy="14" r="3.200" fill="#fff"/><circle cx="15" cy="14" r="3.200" fill="#fff"/><circle cx="8.500" cy="14.500" r="1.300" fill="#222"/><circle cx="14.500" cy="14.500" r="1.300" fill="#222"/><path d="M9,19 L15,19 L12,23 Z" fill="#f28c28"/></svg>
<div class="abs" style="left:256px;top:1010px;width:4px;height:38px;background:#404040;border-left:1px solid #fff;border-right:1px solid #fff"></div>
<div class="abs" style="left:262px;top:1010px;width:48px;height:38px;background:#d4d0c8;border:1px solid;border-color:#fff #404040 #404040 #fff;box-shadow:inset -1px -1px 0 #808080;"></div>
<svg width="36" height="26" style="left:268px;top:1016px"><path d="M3,14 L22,4 L34,9 L15,20 Z" fill="#e9dd7c" stroke="#a89a3a"/><path d="M3,14 L15,20 L15,24 L3,18 Z" fill="#cfc257" stroke="#a89a3a"/><path d="M15,20 L34,9 L34,13 L15,24 Z" fill="#f6efad" stroke="#a89a3a"/><path d="M8,13 L23,6" stroke="#fff" stroke-width="2"/></svg>
<svg width="30" height="30" style="left:319px;top:1015px"><rect x="5" y="1" width="22" height="24" fill="#a9d3f0" stroke="#78b0d8"/><rect x="2" y="4" width="22" height="24" fill="#d7ebf9" stroke="#78b0d8"/><circle cx="13" cy="16" r="8.500" fill="#f2801c"/><circle cx="13" cy="16" r="8.500" fill="none" stroke="#fbd2a6" stroke-width="1.500"/><path d="M10.500,11.500 L18,16 L10.500,20.500 Z" fill="#fff"/></svg>
<div class="abs" style="left:362px;top:1010px;width:48px;height:38px;background:#d4d0c8;border:1px solid;border-color:#fff #404040 #404040 #fff;box-shadow:inset -1px -1px 0 #808080;"></div>
<div class="abs" style="left:370px;top:1017px;width:30px;height:25px;background:#000;border-top:3px solid #8c8c8c;"></div>
<div class="t" style="left:373px;top:1023px;font-size:8px;font-weight:bold;color:#fff;font-family:'Liberation Mono',monospace;letter-spacing:0">C:\_</div>
<div class="t" id="ru" style="left:1448px;top:1020px;font-size:11px;color:#000;line-height:14px">RU</div>
<div class="abs" style="left:1467px;top:1016px;width:2px;height:26px;background:#808080;border-right:1px solid #fff"></div>
<div class="abs" style="left:1472px;top:1010px;width:206px;height:38px;border:1px solid;border-color:#808080 #fff #fff #808080;"></div>
<svg width="10" height="12" style="left:1478px;top:1023px"><path d="M1,4.500 L4,1.500 L7,4.500 M1,9 L4,6 L7,9" stroke="#000" stroke-width="1.500" fill="none"/></svg>
<svg width="20" height="18" style="left:1494px;top:1020px"><path d="M2,1 V17" stroke="#888" stroke-width="1.500"/><path d="M3,2 Q7,0 10,3 Q13,5 16,3 L16,11 Q13,13 10,11 Q7,8 3,10 Z" fill="#f4f4f4" stroke="#999"/><circle cx="13" cy="12.500" r="4.500" fill="#d9312b"/><path d="M11,10.500 l4,4 M15,10.500 l-4,4" stroke="#fff" stroke-width="1.400"/></svg>
<svg width="18" height="18" style="left:1519px;top:1020px"><rect x="4" y="3" width="12" height="10" fill="#c9c9c9" stroke="#777"/><rect x="6" y="14" width="8" height="2" fill="#888"/><path d="M3,1 v7 M1,2 v4 M5,2 v4" stroke="#666" stroke-width="1.200"/></svg>
<svg width="18" height="18" style="left:1542px;top:1020px"><path d="M1,6 h4 l5,-4 v14 l-5,-4 h-4 Z" fill="#e6e6e6" stroke="#777"/><path d="M12,6 q2,3 0,6 M14.500,4 q3,5 0,10" stroke="#888" fill="none" stroke-width="1.200"/></svg>
<svg width="16" height="14" viewBox="0 0 18 16" style="left:1567px;top:1022px"><path d="M6,0 L12,0 L18,10 L12,10 Z" fill="#f9c73a"/><path d="M6,0 L0,10 L3,16 L9,5 Z" fill="#1ca261"/><path d="M6,10 L18,10 L15,16 L3,16 Z" fill="#4a86e0"/></svg>
<div class="t" id="clk1" style="left:1593px;top:1014px;width:62px;text-align:center;font-size:11px;color:#000;line-height:14px">14:35</div>
<div class="t" id="clk2" style="left:1593px;top:1030px;width:62px;text-align:center;font-size:11px;color:#000;line-height:14px">01.02.2013</div>
<svg width="16" height="13" style="left:1660px;top:1023px"><rect x="0.500" y="0.500" width="15" height="10" fill="#1e6fd0" stroke="#5aa0e8"/><rect x="0" y="10" width="16" height="2.500" fill="#223"/></svg>
</body></html>
